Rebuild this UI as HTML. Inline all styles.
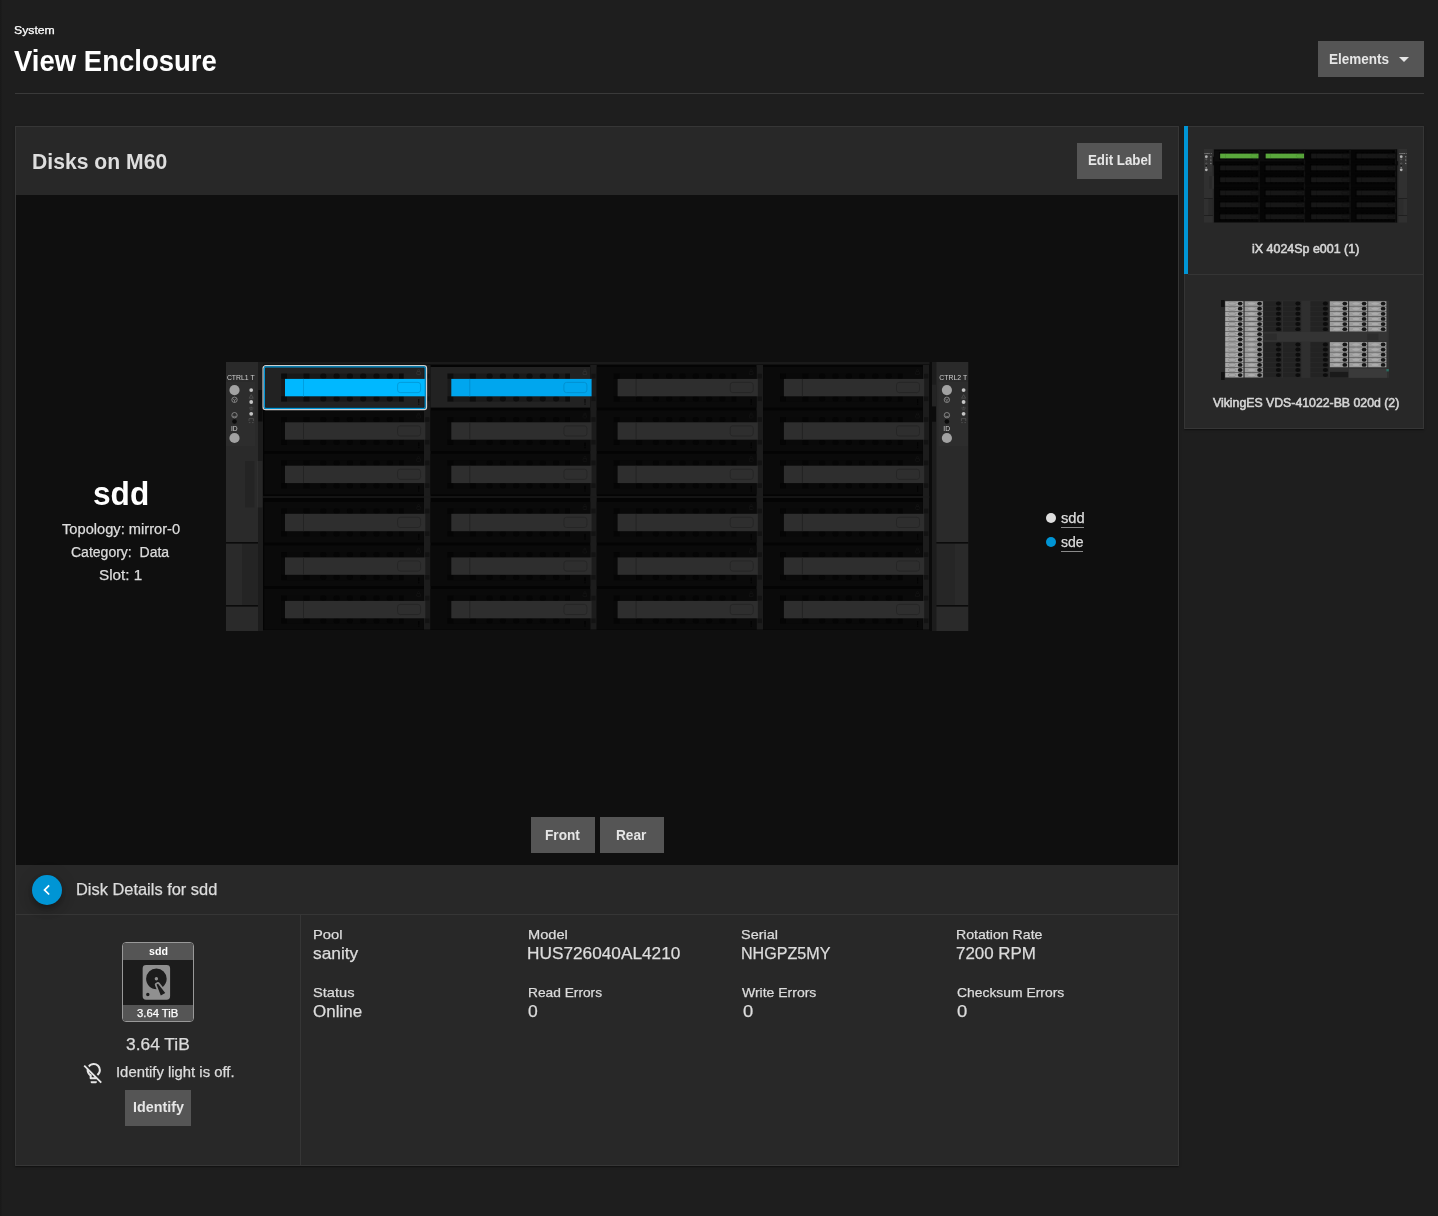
<!DOCTYPE html>
<html lang="en">
<head>
<meta charset="utf-8">
<title>View Enclosure</title>
<style>
html,body{margin:0;padding:0;background:#1e1e1e;}
body{width:1438px;height:1216px;overflow:hidden;font-family:"Liberation Sans",sans-serif;}
#page{will-change:transform;position:relative;width:1438px;height:1216px;background:#1e1e1e;overflow:hidden;}
#page *{box-sizing:border-box;}
.abs{position:absolute;}
.t{position:absolute;white-space:nowrap;line-height:1;transform-origin:0 0;display:inline-block;}
.btn{position:absolute;background:#555555;}
svg{position:absolute;display:block;overflow:visible;}
</style>
</head>
<body>
<div id="page">

<div class="abs" style="left:0;top:0;width:2px;height:1216px;background:linear-gradient(90deg,#191919,#1c1c1c)"></div>
<div class="abs" style="left:15px;top:93px;width:1409px;height:1px;background:#3a3a3a"></div>
<div class="btn" style="left:1318px;top:41px;width:106px;height:36px"></div>
<svg style="left:1399px;top:57px" width="10" height="5" viewBox="0 0 10 5"><path d="M0 0h10l-5 5z" fill="#e6e6e6"/></svg>

<!-- main card -->
<div class="abs" style="left:15px;top:126px;width:1164px;height:1040px;background:#282828;border:1px solid #363636;box-shadow:0 2px 1px -1px rgba(0,0,0,.2),0 1px 1px rgba(0,0,0,.14),0 1px 3px rgba(0,0,0,.12)"></div>
<div class="btn" style="left:1077px;top:143px;width:85px;height:36px"></div>
<div class="abs" style="left:16px;top:195px;width:1162px;height:670px;background:#0f0f0f"></div>
<div class="abs" style="left:226px;top:362px;width:742px;height:269px"><svg class="enc" width="742" height="269" viewBox="0 0 742 269" font-family='"Liberation Sans", sans-serif'><rect x="36" y="0.5" width="670" height="267.5" fill="#040404"/><rect x="36" y="0" width="670" height="2.6" fill="#1a1a1a"/><rect x="198.0" y="3" width="6.5" height="264.6" fill="#1c1c1c"/><rect x="364.2" y="3" width="6.5" height="264.6" fill="#1c1c1c"/><rect x="530.5" y="3" width="6.5" height="264.6" fill="#1c1c1c"/><rect x="696.9" y="3" width="6.5" height="264.6" fill="#1c1c1c"/><rect x="199.2" y="11.8" width="4.2" height="4.6" fill="#131313"/><rect x="199.2" y="34.5" width="4.2" height="4.6" fill="#131313"/><rect x="199.2" y="55.2" width="4.2" height="4.6" fill="#131313"/><rect x="199.2" y="77.9" width="4.2" height="4.6" fill="#131313"/><rect x="199.2" y="98.6" width="4.2" height="4.6" fill="#131313"/><rect x="199.2" y="121.3" width="4.2" height="4.6" fill="#131313"/><rect x="199.2" y="146.7" width="4.2" height="4.6" fill="#131313"/><rect x="199.2" y="169.4" width="4.2" height="4.6" fill="#131313"/><rect x="199.2" y="190.3" width="4.2" height="4.6" fill="#131313"/><rect x="199.2" y="213.0" width="4.2" height="4.6" fill="#131313"/><rect x="199.2" y="233.8" width="4.2" height="4.6" fill="#131313"/><rect x="199.2" y="256.5" width="4.2" height="4.6" fill="#131313"/><rect x="365.4" y="11.8" width="4.2" height="4.6" fill="#131313"/><rect x="365.4" y="34.5" width="4.2" height="4.6" fill="#131313"/><rect x="365.4" y="55.2" width="4.2" height="4.6" fill="#131313"/><rect x="365.4" y="77.9" width="4.2" height="4.6" fill="#131313"/><rect x="365.4" y="98.6" width="4.2" height="4.6" fill="#131313"/><rect x="365.4" y="121.3" width="4.2" height="4.6" fill="#131313"/><rect x="365.4" y="146.7" width="4.2" height="4.6" fill="#131313"/><rect x="365.4" y="169.4" width="4.2" height="4.6" fill="#131313"/><rect x="365.4" y="190.3" width="4.2" height="4.6" fill="#131313"/><rect x="365.4" y="213.0" width="4.2" height="4.6" fill="#131313"/><rect x="365.4" y="233.8" width="4.2" height="4.6" fill="#131313"/><rect x="365.4" y="256.5" width="4.2" height="4.6" fill="#131313"/><rect x="531.7" y="11.8" width="4.2" height="4.6" fill="#131313"/><rect x="531.7" y="34.5" width="4.2" height="4.6" fill="#131313"/><rect x="531.7" y="55.2" width="4.2" height="4.6" fill="#131313"/><rect x="531.7" y="77.9" width="4.2" height="4.6" fill="#131313"/><rect x="531.7" y="98.6" width="4.2" height="4.6" fill="#131313"/><rect x="531.7" y="121.3" width="4.2" height="4.6" fill="#131313"/><rect x="531.7" y="146.7" width="4.2" height="4.6" fill="#131313"/><rect x="531.7" y="169.4" width="4.2" height="4.6" fill="#131313"/><rect x="531.7" y="190.3" width="4.2" height="4.6" fill="#131313"/><rect x="531.7" y="213.0" width="4.2" height="4.6" fill="#131313"/><rect x="531.7" y="233.8" width="4.2" height="4.6" fill="#131313"/><rect x="531.7" y="256.5" width="4.2" height="4.6" fill="#131313"/><rect x="698.1" y="11.8" width="4.2" height="4.6" fill="#131313"/><rect x="698.1" y="34.5" width="4.2" height="4.6" fill="#131313"/><rect x="698.1" y="55.2" width="4.2" height="4.6" fill="#131313"/><rect x="698.1" y="77.9" width="4.2" height="4.6" fill="#131313"/><rect x="698.1" y="98.6" width="4.2" height="4.6" fill="#131313"/><rect x="698.1" y="121.3" width="4.2" height="4.6" fill="#131313"/><rect x="698.1" y="146.7" width="4.2" height="4.6" fill="#131313"/><rect x="698.1" y="169.4" width="4.2" height="4.6" fill="#131313"/><rect x="698.1" y="190.3" width="4.2" height="4.6" fill="#131313"/><rect x="698.1" y="213.0" width="4.2" height="4.6" fill="#131313"/><rect x="698.1" y="233.8" width="4.2" height="4.6" fill="#131313"/><rect x="698.1" y="256.5" width="4.2" height="4.6" fill="#131313"/><rect x="37" y="134.3" width="669" height="1.4" fill="#1c1c1c"/><rect x="38.2" y="5.0" width="159.7" height="40.6" fill="#222222"/><rect x="55.2" y="11.6" width="122.4" height="28" fill="#191919"/><rect x="55.2" y="11.6" width="5.8" height="5.2" fill="#0c0c0c"/><rect x="77.5" y="11.6" width="6" height="5.2" fill="#0c0c0c"/><rect x="94.2" y="11.6" width="6.2" height="5.2" rx="2.4" fill="#0c0c0c"/><rect x="107.5" y="11.6" width="6.2" height="5.2" rx="2.4" fill="#0c0c0c"/><rect x="120.8" y="11.6" width="6.2" height="5.2" rx="2.4" fill="#0c0c0c"/><rect x="134.1" y="11.6" width="6.2" height="5.2" rx="2.4" fill="#0c0c0c"/><rect x="147.4" y="11.6" width="6.2" height="5.2" rx="2.4" fill="#0c0c0c"/><rect x="160.7" y="11.6" width="6.2" height="5.2" rx="2.4" fill="#0c0c0c"/><rect x="173.0" y="11.6" width="4.6" height="5.2" fill="#0c0c0c"/><rect x="55.2" y="34.3" width="5.8" height="5.2" fill="#0c0c0c"/><rect x="77.5" y="34.3" width="6" height="5.2" fill="#0c0c0c"/><rect x="94.2" y="34.3" width="6.2" height="5.2" rx="2.4" fill="#0c0c0c"/><rect x="107.5" y="34.3" width="6.2" height="5.2" rx="2.4" fill="#0c0c0c"/><rect x="120.8" y="34.3" width="6.2" height="5.2" rx="2.4" fill="#0c0c0c"/><rect x="134.1" y="34.3" width="6.2" height="5.2" rx="2.4" fill="#0c0c0c"/><rect x="147.4" y="34.3" width="6.2" height="5.2" rx="2.4" fill="#0c0c0c"/><rect x="160.7" y="34.3" width="6.2" height="5.2" rx="2.4" fill="#0c0c0c"/><rect x="173.0" y="34.3" width="4.6" height="5.2" fill="#0c0c0c"/><rect x="59.0" y="16.9" width="140.3" height="17.4" fill="#00b8ff"/><rect x="77.0" y="16.9" width="1" height="17.4" fill="#009fe0"/><rect x="171.6" y="20.4" width="23" height="10.2" rx="2.6" fill="none" stroke="#0098d8" stroke-width="0.9"/><rect x="190.8" y="9.6" width="3.6" height="3" rx="0.6" fill="none" stroke="#3a3a3a" stroke-width="0.7"/><path d="M191.6 9.6 v-1 a1 1 0 0 1 2 0 v1" fill="none" stroke="#3a3a3a" stroke-width="0.6"/><rect x="192.1" y="37.0" width="1.2" height="3.8" fill="#0c0c0c"/><rect x="192.1" y="41.6" width="1.2" height="1.2" fill="#0c0c0c"/><rect x="38.2" y="48.4" width="159.7" height="40.6" fill="#0a0a0a"/><rect x="55.2" y="55.0" width="122.4" height="28" fill="#090909"/><rect x="55.2" y="55.0" width="5.8" height="5.2" fill="#050505"/><rect x="77.5" y="55.0" width="6" height="5.2" fill="#050505"/><rect x="94.2" y="55.0" width="6.2" height="5.2" rx="2.4" fill="#050505"/><rect x="107.5" y="55.0" width="6.2" height="5.2" rx="2.4" fill="#050505"/><rect x="120.8" y="55.0" width="6.2" height="5.2" rx="2.4" fill="#050505"/><rect x="134.1" y="55.0" width="6.2" height="5.2" rx="2.4" fill="#050505"/><rect x="147.4" y="55.0" width="6.2" height="5.2" rx="2.4" fill="#050505"/><rect x="160.7" y="55.0" width="6.2" height="5.2" rx="2.4" fill="#050505"/><rect x="173.0" y="55.0" width="4.6" height="5.2" fill="#050505"/><rect x="55.2" y="77.7" width="5.8" height="5.2" fill="#050505"/><rect x="77.5" y="77.7" width="6" height="5.2" fill="#050505"/><rect x="94.2" y="77.7" width="6.2" height="5.2" rx="2.4" fill="#050505"/><rect x="107.5" y="77.7" width="6.2" height="5.2" rx="2.4" fill="#050505"/><rect x="120.8" y="77.7" width="6.2" height="5.2" rx="2.4" fill="#050505"/><rect x="134.1" y="77.7" width="6.2" height="5.2" rx="2.4" fill="#050505"/><rect x="147.4" y="77.7" width="6.2" height="5.2" rx="2.4" fill="#050505"/><rect x="160.7" y="77.7" width="6.2" height="5.2" rx="2.4" fill="#050505"/><rect x="173.0" y="77.7" width="4.6" height="5.2" fill="#050505"/><rect x="59.0" y="60.3" width="140.3" height="17.4" fill="#2e2e2e"/><rect x="77.0" y="60.3" width="1" height="17.4" fill="#232323"/><rect x="171.6" y="63.8" width="23" height="10.2" rx="2.6" fill="none" stroke="#252525" stroke-width="0.9"/><rect x="190.8" y="53.0" width="3.6" height="3" rx="0.6" fill="none" stroke="#161616" stroke-width="0.7"/><path d="M191.6 53.0 v-1 a1 1 0 0 1 2 0 v1" fill="none" stroke="#161616" stroke-width="0.6"/><rect x="192.1" y="80.4" width="1.2" height="3.8" fill="#030303"/><rect x="192.1" y="85.0" width="1.2" height="1.2" fill="#030303"/><rect x="38.2" y="91.8" width="159.7" height="40.6" fill="#0a0a0a"/><rect x="55.2" y="98.4" width="122.4" height="28" fill="#090909"/><rect x="55.2" y="98.4" width="5.8" height="5.2" fill="#050505"/><rect x="77.5" y="98.4" width="6" height="5.2" fill="#050505"/><rect x="94.2" y="98.4" width="6.2" height="5.2" rx="2.4" fill="#050505"/><rect x="107.5" y="98.4" width="6.2" height="5.2" rx="2.4" fill="#050505"/><rect x="120.8" y="98.4" width="6.2" height="5.2" rx="2.4" fill="#050505"/><rect x="134.1" y="98.4" width="6.2" height="5.2" rx="2.4" fill="#050505"/><rect x="147.4" y="98.4" width="6.2" height="5.2" rx="2.4" fill="#050505"/><rect x="160.7" y="98.4" width="6.2" height="5.2" rx="2.4" fill="#050505"/><rect x="173.0" y="98.4" width="4.6" height="5.2" fill="#050505"/><rect x="55.2" y="121.1" width="5.8" height="5.2" fill="#050505"/><rect x="77.5" y="121.1" width="6" height="5.2" fill="#050505"/><rect x="94.2" y="121.1" width="6.2" height="5.2" rx="2.4" fill="#050505"/><rect x="107.5" y="121.1" width="6.2" height="5.2" rx="2.4" fill="#050505"/><rect x="120.8" y="121.1" width="6.2" height="5.2" rx="2.4" fill="#050505"/><rect x="134.1" y="121.1" width="6.2" height="5.2" rx="2.4" fill="#050505"/><rect x="147.4" y="121.1" width="6.2" height="5.2" rx="2.4" fill="#050505"/><rect x="160.7" y="121.1" width="6.2" height="5.2" rx="2.4" fill="#050505"/><rect x="173.0" y="121.1" width="4.6" height="5.2" fill="#050505"/><rect x="59.0" y="103.7" width="140.3" height="17.4" fill="#2e2e2e"/><rect x="77.0" y="103.7" width="1" height="17.4" fill="#232323"/><rect x="171.6" y="107.2" width="23" height="10.2" rx="2.6" fill="none" stroke="#252525" stroke-width="0.9"/><rect x="190.8" y="96.4" width="3.6" height="3" rx="0.6" fill="none" stroke="#161616" stroke-width="0.7"/><path d="M191.6 96.4 v-1 a1 1 0 0 1 2 0 v1" fill="none" stroke="#161616" stroke-width="0.6"/><rect x="192.1" y="123.8" width="1.2" height="3.8" fill="#030303"/><rect x="192.1" y="128.4" width="1.2" height="1.2" fill="#030303"/><rect x="38.2" y="139.9" width="159.7" height="40.6" fill="#0a0a0a"/><rect x="55.2" y="146.5" width="122.4" height="28" fill="#090909"/><rect x="55.2" y="146.5" width="5.8" height="5.2" fill="#050505"/><rect x="77.5" y="146.5" width="6" height="5.2" fill="#050505"/><rect x="94.2" y="146.5" width="6.2" height="5.2" rx="2.4" fill="#050505"/><rect x="107.5" y="146.5" width="6.2" height="5.2" rx="2.4" fill="#050505"/><rect x="120.8" y="146.5" width="6.2" height="5.2" rx="2.4" fill="#050505"/><rect x="134.1" y="146.5" width="6.2" height="5.2" rx="2.4" fill="#050505"/><rect x="147.4" y="146.5" width="6.2" height="5.2" rx="2.4" fill="#050505"/><rect x="160.7" y="146.5" width="6.2" height="5.2" rx="2.4" fill="#050505"/><rect x="173.0" y="146.5" width="4.6" height="5.2" fill="#050505"/><rect x="55.2" y="169.2" width="5.8" height="5.2" fill="#050505"/><rect x="77.5" y="169.2" width="6" height="5.2" fill="#050505"/><rect x="94.2" y="169.2" width="6.2" height="5.2" rx="2.4" fill="#050505"/><rect x="107.5" y="169.2" width="6.2" height="5.2" rx="2.4" fill="#050505"/><rect x="120.8" y="169.2" width="6.2" height="5.2" rx="2.4" fill="#050505"/><rect x="134.1" y="169.2" width="6.2" height="5.2" rx="2.4" fill="#050505"/><rect x="147.4" y="169.2" width="6.2" height="5.2" rx="2.4" fill="#050505"/><rect x="160.7" y="169.2" width="6.2" height="5.2" rx="2.4" fill="#050505"/><rect x="173.0" y="169.2" width="4.6" height="5.2" fill="#050505"/><rect x="59.0" y="151.8" width="140.3" height="17.4" fill="#2e2e2e"/><rect x="77.0" y="151.8" width="1" height="17.4" fill="#232323"/><rect x="171.6" y="155.3" width="23" height="10.2" rx="2.6" fill="none" stroke="#252525" stroke-width="0.9"/><rect x="190.8" y="144.5" width="3.6" height="3" rx="0.6" fill="none" stroke="#161616" stroke-width="0.7"/><path d="M191.6 144.5 v-1 a1 1 0 0 1 2 0 v1" fill="none" stroke="#161616" stroke-width="0.6"/><rect x="192.1" y="171.9" width="1.2" height="3.8" fill="#030303"/><rect x="192.1" y="176.5" width="1.2" height="1.2" fill="#030303"/><rect x="38.2" y="183.5" width="159.7" height="40.6" fill="#0a0a0a"/><rect x="55.2" y="190.1" width="122.4" height="28" fill="#090909"/><rect x="55.2" y="190.1" width="5.8" height="5.2" fill="#050505"/><rect x="77.5" y="190.1" width="6" height="5.2" fill="#050505"/><rect x="94.2" y="190.1" width="6.2" height="5.2" rx="2.4" fill="#050505"/><rect x="107.5" y="190.1" width="6.2" height="5.2" rx="2.4" fill="#050505"/><rect x="120.8" y="190.1" width="6.2" height="5.2" rx="2.4" fill="#050505"/><rect x="134.1" y="190.1" width="6.2" height="5.2" rx="2.4" fill="#050505"/><rect x="147.4" y="190.1" width="6.2" height="5.2" rx="2.4" fill="#050505"/><rect x="160.7" y="190.1" width="6.2" height="5.2" rx="2.4" fill="#050505"/><rect x="173.0" y="190.1" width="4.6" height="5.2" fill="#050505"/><rect x="55.2" y="212.8" width="5.8" height="5.2" fill="#050505"/><rect x="77.5" y="212.8" width="6" height="5.2" fill="#050505"/><rect x="94.2" y="212.8" width="6.2" height="5.2" rx="2.4" fill="#050505"/><rect x="107.5" y="212.8" width="6.2" height="5.2" rx="2.4" fill="#050505"/><rect x="120.8" y="212.8" width="6.2" height="5.2" rx="2.4" fill="#050505"/><rect x="134.1" y="212.8" width="6.2" height="5.2" rx="2.4" fill="#050505"/><rect x="147.4" y="212.8" width="6.2" height="5.2" rx="2.4" fill="#050505"/><rect x="160.7" y="212.8" width="6.2" height="5.2" rx="2.4" fill="#050505"/><rect x="173.0" y="212.8" width="4.6" height="5.2" fill="#050505"/><rect x="59.0" y="195.4" width="140.3" height="17.4" fill="#2e2e2e"/><rect x="77.0" y="195.4" width="1" height="17.4" fill="#232323"/><rect x="171.6" y="198.9" width="23" height="10.2" rx="2.6" fill="none" stroke="#252525" stroke-width="0.9"/><rect x="190.8" y="188.1" width="3.6" height="3" rx="0.6" fill="none" stroke="#161616" stroke-width="0.7"/><path d="M191.6 188.1 v-1 a1 1 0 0 1 2 0 v1" fill="none" stroke="#161616" stroke-width="0.6"/><rect x="192.1" y="215.5" width="1.2" height="3.8" fill="#030303"/><rect x="192.1" y="220.1" width="1.2" height="1.2" fill="#030303"/><rect x="38.2" y="227.0" width="159.7" height="40.6" fill="#0a0a0a"/><rect x="55.2" y="233.6" width="122.4" height="28" fill="#090909"/><rect x="55.2" y="233.6" width="5.8" height="5.2" fill="#050505"/><rect x="77.5" y="233.6" width="6" height="5.2" fill="#050505"/><rect x="94.2" y="233.6" width="6.2" height="5.2" rx="2.4" fill="#050505"/><rect x="107.5" y="233.6" width="6.2" height="5.2" rx="2.4" fill="#050505"/><rect x="120.8" y="233.6" width="6.2" height="5.2" rx="2.4" fill="#050505"/><rect x="134.1" y="233.6" width="6.2" height="5.2" rx="2.4" fill="#050505"/><rect x="147.4" y="233.6" width="6.2" height="5.2" rx="2.4" fill="#050505"/><rect x="160.7" y="233.6" width="6.2" height="5.2" rx="2.4" fill="#050505"/><rect x="173.0" y="233.6" width="4.6" height="5.2" fill="#050505"/><rect x="55.2" y="256.3" width="5.8" height="5.2" fill="#050505"/><rect x="77.5" y="256.3" width="6" height="5.2" fill="#050505"/><rect x="94.2" y="256.3" width="6.2" height="5.2" rx="2.4" fill="#050505"/><rect x="107.5" y="256.3" width="6.2" height="5.2" rx="2.4" fill="#050505"/><rect x="120.8" y="256.3" width="6.2" height="5.2" rx="2.4" fill="#050505"/><rect x="134.1" y="256.3" width="6.2" height="5.2" rx="2.4" fill="#050505"/><rect x="147.4" y="256.3" width="6.2" height="5.2" rx="2.4" fill="#050505"/><rect x="160.7" y="256.3" width="6.2" height="5.2" rx="2.4" fill="#050505"/><rect x="173.0" y="256.3" width="4.6" height="5.2" fill="#050505"/><rect x="59.0" y="238.9" width="140.3" height="17.4" fill="#2e2e2e"/><rect x="77.0" y="238.9" width="1" height="17.4" fill="#232323"/><rect x="171.6" y="242.4" width="23" height="10.2" rx="2.6" fill="none" stroke="#252525" stroke-width="0.9"/><rect x="190.8" y="231.6" width="3.6" height="3" rx="0.6" fill="none" stroke="#161616" stroke-width="0.7"/><path d="M191.6 231.6 v-1 a1 1 0 0 1 2 0 v1" fill="none" stroke="#161616" stroke-width="0.6"/><rect x="192.1" y="259.0" width="1.2" height="3.8" fill="#030303"/><rect x="192.1" y="263.6" width="1.2" height="1.2" fill="#030303"/><rect x="204.5" y="5.0" width="159.7" height="40.6" fill="#222222"/><rect x="221.5" y="11.6" width="122.4" height="28" fill="#1a1a1a"/><rect x="221.5" y="11.6" width="5.8" height="5.2" fill="#0d0d0d"/><rect x="243.8" y="11.6" width="6" height="5.2" fill="#0d0d0d"/><rect x="260.5" y="11.6" width="6.2" height="5.2" rx="2.4" fill="#0d0d0d"/><rect x="273.8" y="11.6" width="6.2" height="5.2" rx="2.4" fill="#0d0d0d"/><rect x="287.1" y="11.6" width="6.2" height="5.2" rx="2.4" fill="#0d0d0d"/><rect x="300.4" y="11.6" width="6.2" height="5.2" rx="2.4" fill="#0d0d0d"/><rect x="313.7" y="11.6" width="6.2" height="5.2" rx="2.4" fill="#0d0d0d"/><rect x="327.0" y="11.6" width="6.2" height="5.2" rx="2.4" fill="#0d0d0d"/><rect x="339.3" y="11.6" width="4.6" height="5.2" fill="#0d0d0d"/><rect x="221.5" y="34.3" width="5.8" height="5.2" fill="#0d0d0d"/><rect x="243.8" y="34.3" width="6" height="5.2" fill="#0d0d0d"/><rect x="260.5" y="34.3" width="6.2" height="5.2" rx="2.4" fill="#0d0d0d"/><rect x="273.8" y="34.3" width="6.2" height="5.2" rx="2.4" fill="#0d0d0d"/><rect x="287.1" y="34.3" width="6.2" height="5.2" rx="2.4" fill="#0d0d0d"/><rect x="300.4" y="34.3" width="6.2" height="5.2" rx="2.4" fill="#0d0d0d"/><rect x="313.7" y="34.3" width="6.2" height="5.2" rx="2.4" fill="#0d0d0d"/><rect x="327.0" y="34.3" width="6.2" height="5.2" rx="2.4" fill="#0d0d0d"/><rect x="339.3" y="34.3" width="4.6" height="5.2" fill="#0d0d0d"/><rect x="225.3" y="16.9" width="140.3" height="17.4" fill="#00a6ee"/><rect x="243.3" y="16.9" width="1" height="17.4" fill="#0090d2"/><rect x="337.9" y="20.4" width="23" height="10.2" rx="2.6" fill="none" stroke="#008fce" stroke-width="0.9"/><rect x="357.1" y="9.6" width="3.6" height="3" rx="0.6" fill="none" stroke="#363636" stroke-width="0.7"/><path d="M357.9 9.6 v-1 a1 1 0 0 1 2 0 v1" fill="none" stroke="#363636" stroke-width="0.6"/><rect x="358.4" y="37.0" width="1.2" height="3.8" fill="#0c0c0c"/><rect x="358.4" y="41.6" width="1.2" height="1.2" fill="#0c0c0c"/><rect x="204.5" y="48.4" width="159.7" height="40.6" fill="#0a0a0a"/><rect x="221.5" y="55.0" width="122.4" height="28" fill="#090909"/><rect x="221.5" y="55.0" width="5.8" height="5.2" fill="#050505"/><rect x="243.8" y="55.0" width="6" height="5.2" fill="#050505"/><rect x="260.5" y="55.0" width="6.2" height="5.2" rx="2.4" fill="#050505"/><rect x="273.8" y="55.0" width="6.2" height="5.2" rx="2.4" fill="#050505"/><rect x="287.1" y="55.0" width="6.2" height="5.2" rx="2.4" fill="#050505"/><rect x="300.4" y="55.0" width="6.2" height="5.2" rx="2.4" fill="#050505"/><rect x="313.7" y="55.0" width="6.2" height="5.2" rx="2.4" fill="#050505"/><rect x="327.0" y="55.0" width="6.2" height="5.2" rx="2.4" fill="#050505"/><rect x="339.3" y="55.0" width="4.6" height="5.2" fill="#050505"/><rect x="221.5" y="77.7" width="5.8" height="5.2" fill="#050505"/><rect x="243.8" y="77.7" width="6" height="5.2" fill="#050505"/><rect x="260.5" y="77.7" width="6.2" height="5.2" rx="2.4" fill="#050505"/><rect x="273.8" y="77.7" width="6.2" height="5.2" rx="2.4" fill="#050505"/><rect x="287.1" y="77.7" width="6.2" height="5.2" rx="2.4" fill="#050505"/><rect x="300.4" y="77.7" width="6.2" height="5.2" rx="2.4" fill="#050505"/><rect x="313.7" y="77.7" width="6.2" height="5.2" rx="2.4" fill="#050505"/><rect x="327.0" y="77.7" width="6.2" height="5.2" rx="2.4" fill="#050505"/><rect x="339.3" y="77.7" width="4.6" height="5.2" fill="#050505"/><rect x="225.3" y="60.3" width="140.3" height="17.4" fill="#2e2e2e"/><rect x="243.3" y="60.3" width="1" height="17.4" fill="#232323"/><rect x="337.9" y="63.8" width="23" height="10.2" rx="2.6" fill="none" stroke="#252525" stroke-width="0.9"/><rect x="357.1" y="53.0" width="3.6" height="3" rx="0.6" fill="none" stroke="#161616" stroke-width="0.7"/><path d="M357.9 53.0 v-1 a1 1 0 0 1 2 0 v1" fill="none" stroke="#161616" stroke-width="0.6"/><rect x="358.4" y="80.4" width="1.2" height="3.8" fill="#030303"/><rect x="358.4" y="85.0" width="1.2" height="1.2" fill="#030303"/><rect x="204.5" y="91.8" width="159.7" height="40.6" fill="#0a0a0a"/><rect x="221.5" y="98.4" width="122.4" height="28" fill="#090909"/><rect x="221.5" y="98.4" width="5.8" height="5.2" fill="#050505"/><rect x="243.8" y="98.4" width="6" height="5.2" fill="#050505"/><rect x="260.5" y="98.4" width="6.2" height="5.2" rx="2.4" fill="#050505"/><rect x="273.8" y="98.4" width="6.2" height="5.2" rx="2.4" fill="#050505"/><rect x="287.1" y="98.4" width="6.2" height="5.2" rx="2.4" fill="#050505"/><rect x="300.4" y="98.4" width="6.2" height="5.2" rx="2.4" fill="#050505"/><rect x="313.7" y="98.4" width="6.2" height="5.2" rx="2.4" fill="#050505"/><rect x="327.0" y="98.4" width="6.2" height="5.2" rx="2.4" fill="#050505"/><rect x="339.3" y="98.4" width="4.6" height="5.2" fill="#050505"/><rect x="221.5" y="121.1" width="5.8" height="5.2" fill="#050505"/><rect x="243.8" y="121.1" width="6" height="5.2" fill="#050505"/><rect x="260.5" y="121.1" width="6.2" height="5.2" rx="2.4" fill="#050505"/><rect x="273.8" y="121.1" width="6.2" height="5.2" rx="2.4" fill="#050505"/><rect x="287.1" y="121.1" width="6.2" height="5.2" rx="2.4" fill="#050505"/><rect x="300.4" y="121.1" width="6.2" height="5.2" rx="2.4" fill="#050505"/><rect x="313.7" y="121.1" width="6.2" height="5.2" rx="2.4" fill="#050505"/><rect x="327.0" y="121.1" width="6.2" height="5.2" rx="2.4" fill="#050505"/><rect x="339.3" y="121.1" width="4.6" height="5.2" fill="#050505"/><rect x="225.3" y="103.7" width="140.3" height="17.4" fill="#2e2e2e"/><rect x="243.3" y="103.7" width="1" height="17.4" fill="#232323"/><rect x="337.9" y="107.2" width="23" height="10.2" rx="2.6" fill="none" stroke="#252525" stroke-width="0.9"/><rect x="357.1" y="96.4" width="3.6" height="3" rx="0.6" fill="none" stroke="#161616" stroke-width="0.7"/><path d="M357.9 96.4 v-1 a1 1 0 0 1 2 0 v1" fill="none" stroke="#161616" stroke-width="0.6"/><rect x="358.4" y="123.8" width="1.2" height="3.8" fill="#030303"/><rect x="358.4" y="128.4" width="1.2" height="1.2" fill="#030303"/><rect x="204.5" y="139.9" width="159.7" height="40.6" fill="#0a0a0a"/><rect x="221.5" y="146.5" width="122.4" height="28" fill="#090909"/><rect x="221.5" y="146.5" width="5.8" height="5.2" fill="#050505"/><rect x="243.8" y="146.5" width="6" height="5.2" fill="#050505"/><rect x="260.5" y="146.5" width="6.2" height="5.2" rx="2.4" fill="#050505"/><rect x="273.8" y="146.5" width="6.2" height="5.2" rx="2.4" fill="#050505"/><rect x="287.1" y="146.5" width="6.2" height="5.2" rx="2.4" fill="#050505"/><rect x="300.4" y="146.5" width="6.2" height="5.2" rx="2.4" fill="#050505"/><rect x="313.7" y="146.5" width="6.2" height="5.2" rx="2.4" fill="#050505"/><rect x="327.0" y="146.5" width="6.2" height="5.2" rx="2.4" fill="#050505"/><rect x="339.3" y="146.5" width="4.6" height="5.2" fill="#050505"/><rect x="221.5" y="169.2" width="5.8" height="5.2" fill="#050505"/><rect x="243.8" y="169.2" width="6" height="5.2" fill="#050505"/><rect x="260.5" y="169.2" width="6.2" height="5.2" rx="2.4" fill="#050505"/><rect x="273.8" y="169.2" width="6.2" height="5.2" rx="2.4" fill="#050505"/><rect x="287.1" y="169.2" width="6.2" height="5.2" rx="2.4" fill="#050505"/><rect x="300.4" y="169.2" width="6.2" height="5.2" rx="2.4" fill="#050505"/><rect x="313.7" y="169.2" width="6.2" height="5.2" rx="2.4" fill="#050505"/><rect x="327.0" y="169.2" width="6.2" height="5.2" rx="2.4" fill="#050505"/><rect x="339.3" y="169.2" width="4.6" height="5.2" fill="#050505"/><rect x="225.3" y="151.8" width="140.3" height="17.4" fill="#2e2e2e"/><rect x="243.3" y="151.8" width="1" height="17.4" fill="#232323"/><rect x="337.9" y="155.3" width="23" height="10.2" rx="2.6" fill="none" stroke="#252525" stroke-width="0.9"/><rect x="357.1" y="144.5" width="3.6" height="3" rx="0.6" fill="none" stroke="#161616" stroke-width="0.7"/><path d="M357.9 144.5 v-1 a1 1 0 0 1 2 0 v1" fill="none" stroke="#161616" stroke-width="0.6"/><rect x="358.4" y="171.9" width="1.2" height="3.8" fill="#030303"/><rect x="358.4" y="176.5" width="1.2" height="1.2" fill="#030303"/><rect x="204.5" y="183.5" width="159.7" height="40.6" fill="#0a0a0a"/><rect x="221.5" y="190.1" width="122.4" height="28" fill="#090909"/><rect x="221.5" y="190.1" width="5.8" height="5.2" fill="#050505"/><rect x="243.8" y="190.1" width="6" height="5.2" fill="#050505"/><rect x="260.5" y="190.1" width="6.2" height="5.2" rx="2.4" fill="#050505"/><rect x="273.8" y="190.1" width="6.2" height="5.2" rx="2.4" fill="#050505"/><rect x="287.1" y="190.1" width="6.2" height="5.2" rx="2.4" fill="#050505"/><rect x="300.4" y="190.1" width="6.2" height="5.2" rx="2.4" fill="#050505"/><rect x="313.7" y="190.1" width="6.2" height="5.2" rx="2.4" fill="#050505"/><rect x="327.0" y="190.1" width="6.2" height="5.2" rx="2.4" fill="#050505"/><rect x="339.3" y="190.1" width="4.6" height="5.2" fill="#050505"/><rect x="221.5" y="212.8" width="5.8" height="5.2" fill="#050505"/><rect x="243.8" y="212.8" width="6" height="5.2" fill="#050505"/><rect x="260.5" y="212.8" width="6.2" height="5.2" rx="2.4" fill="#050505"/><rect x="273.8" y="212.8" width="6.2" height="5.2" rx="2.4" fill="#050505"/><rect x="287.1" y="212.8" width="6.2" height="5.2" rx="2.4" fill="#050505"/><rect x="300.4" y="212.8" width="6.2" height="5.2" rx="2.4" fill="#050505"/><rect x="313.7" y="212.8" width="6.2" height="5.2" rx="2.4" fill="#050505"/><rect x="327.0" y="212.8" width="6.2" height="5.2" rx="2.4" fill="#050505"/><rect x="339.3" y="212.8" width="4.6" height="5.2" fill="#050505"/><rect x="225.3" y="195.4" width="140.3" height="17.4" fill="#2e2e2e"/><rect x="243.3" y="195.4" width="1" height="17.4" fill="#232323"/><rect x="337.9" y="198.9" width="23" height="10.2" rx="2.6" fill="none" stroke="#252525" stroke-width="0.9"/><rect x="357.1" y="188.1" width="3.6" height="3" rx="0.6" fill="none" stroke="#161616" stroke-width="0.7"/><path d="M357.9 188.1 v-1 a1 1 0 0 1 2 0 v1" fill="none" stroke="#161616" stroke-width="0.6"/><rect x="358.4" y="215.5" width="1.2" height="3.8" fill="#030303"/><rect x="358.4" y="220.1" width="1.2" height="1.2" fill="#030303"/><rect x="204.5" y="227.0" width="159.7" height="40.6" fill="#0a0a0a"/><rect x="221.5" y="233.6" width="122.4" height="28" fill="#090909"/><rect x="221.5" y="233.6" width="5.8" height="5.2" fill="#050505"/><rect x="243.8" y="233.6" width="6" height="5.2" fill="#050505"/><rect x="260.5" y="233.6" width="6.2" height="5.2" rx="2.4" fill="#050505"/><rect x="273.8" y="233.6" width="6.2" height="5.2" rx="2.4" fill="#050505"/><rect x="287.1" y="233.6" width="6.2" height="5.2" rx="2.4" fill="#050505"/><rect x="300.4" y="233.6" width="6.2" height="5.2" rx="2.4" fill="#050505"/><rect x="313.7" y="233.6" width="6.2" height="5.2" rx="2.4" fill="#050505"/><rect x="327.0" y="233.6" width="6.2" height="5.2" rx="2.4" fill="#050505"/><rect x="339.3" y="233.6" width="4.6" height="5.2" fill="#050505"/><rect x="221.5" y="256.3" width="5.8" height="5.2" fill="#050505"/><rect x="243.8" y="256.3" width="6" height="5.2" fill="#050505"/><rect x="260.5" y="256.3" width="6.2" height="5.2" rx="2.4" fill="#050505"/><rect x="273.8" y="256.3" width="6.2" height="5.2" rx="2.4" fill="#050505"/><rect x="287.1" y="256.3" width="6.2" height="5.2" rx="2.4" fill="#050505"/><rect x="300.4" y="256.3" width="6.2" height="5.2" rx="2.4" fill="#050505"/><rect x="313.7" y="256.3" width="6.2" height="5.2" rx="2.4" fill="#050505"/><rect x="327.0" y="256.3" width="6.2" height="5.2" rx="2.4" fill="#050505"/><rect x="339.3" y="256.3" width="4.6" height="5.2" fill="#050505"/><rect x="225.3" y="238.9" width="140.3" height="17.4" fill="#2e2e2e"/><rect x="243.3" y="238.9" width="1" height="17.4" fill="#232323"/><rect x="337.9" y="242.4" width="23" height="10.2" rx="2.6" fill="none" stroke="#252525" stroke-width="0.9"/><rect x="357.1" y="231.6" width="3.6" height="3" rx="0.6" fill="none" stroke="#161616" stroke-width="0.7"/><path d="M357.9 231.6 v-1 a1 1 0 0 1 2 0 v1" fill="none" stroke="#161616" stroke-width="0.6"/><rect x="358.4" y="259.0" width="1.2" height="3.8" fill="#030303"/><rect x="358.4" y="263.6" width="1.2" height="1.2" fill="#030303"/><rect x="370.8" y="5.0" width="159.7" height="40.6" fill="#0a0a0a"/><rect x="387.8" y="11.6" width="122.4" height="28" fill="#090909"/><rect x="387.8" y="11.6" width="5.8" height="5.2" fill="#050505"/><rect x="410.1" y="11.6" width="6" height="5.2" fill="#050505"/><rect x="426.8" y="11.6" width="6.2" height="5.2" rx="2.4" fill="#050505"/><rect x="440.1" y="11.6" width="6.2" height="5.2" rx="2.4" fill="#050505"/><rect x="453.4" y="11.6" width="6.2" height="5.2" rx="2.4" fill="#050505"/><rect x="466.7" y="11.6" width="6.2" height="5.2" rx="2.4" fill="#050505"/><rect x="480.0" y="11.6" width="6.2" height="5.2" rx="2.4" fill="#050505"/><rect x="493.3" y="11.6" width="6.2" height="5.2" rx="2.4" fill="#050505"/><rect x="505.6" y="11.6" width="4.6" height="5.2" fill="#050505"/><rect x="387.8" y="34.3" width="5.8" height="5.2" fill="#050505"/><rect x="410.1" y="34.3" width="6" height="5.2" fill="#050505"/><rect x="426.8" y="34.3" width="6.2" height="5.2" rx="2.4" fill="#050505"/><rect x="440.1" y="34.3" width="6.2" height="5.2" rx="2.4" fill="#050505"/><rect x="453.4" y="34.3" width="6.2" height="5.2" rx="2.4" fill="#050505"/><rect x="466.7" y="34.3" width="6.2" height="5.2" rx="2.4" fill="#050505"/><rect x="480.0" y="34.3" width="6.2" height="5.2" rx="2.4" fill="#050505"/><rect x="493.3" y="34.3" width="6.2" height="5.2" rx="2.4" fill="#050505"/><rect x="505.6" y="34.3" width="4.6" height="5.2" fill="#050505"/><rect x="391.6" y="16.9" width="140.3" height="17.4" fill="#2e2e2e"/><rect x="409.6" y="16.9" width="1" height="17.4" fill="#232323"/><rect x="504.2" y="20.4" width="23" height="10.2" rx="2.6" fill="none" stroke="#252525" stroke-width="0.9"/><rect x="523.4" y="9.6" width="3.6" height="3" rx="0.6" fill="none" stroke="#161616" stroke-width="0.7"/><path d="M524.2 9.6 v-1 a1 1 0 0 1 2 0 v1" fill="none" stroke="#161616" stroke-width="0.6"/><rect x="524.7" y="37.0" width="1.2" height="3.8" fill="#030303"/><rect x="524.7" y="41.6" width="1.2" height="1.2" fill="#030303"/><rect x="370.8" y="48.4" width="159.7" height="40.6" fill="#0a0a0a"/><rect x="387.8" y="55.0" width="122.4" height="28" fill="#090909"/><rect x="387.8" y="55.0" width="5.8" height="5.2" fill="#050505"/><rect x="410.1" y="55.0" width="6" height="5.2" fill="#050505"/><rect x="426.8" y="55.0" width="6.2" height="5.2" rx="2.4" fill="#050505"/><rect x="440.1" y="55.0" width="6.2" height="5.2" rx="2.4" fill="#050505"/><rect x="453.4" y="55.0" width="6.2" height="5.2" rx="2.4" fill="#050505"/><rect x="466.7" y="55.0" width="6.2" height="5.2" rx="2.4" fill="#050505"/><rect x="480.0" y="55.0" width="6.2" height="5.2" rx="2.4" fill="#050505"/><rect x="493.3" y="55.0" width="6.2" height="5.2" rx="2.4" fill="#050505"/><rect x="505.6" y="55.0" width="4.6" height="5.2" fill="#050505"/><rect x="387.8" y="77.7" width="5.8" height="5.2" fill="#050505"/><rect x="410.1" y="77.7" width="6" height="5.2" fill="#050505"/><rect x="426.8" y="77.7" width="6.2" height="5.2" rx="2.4" fill="#050505"/><rect x="440.1" y="77.7" width="6.2" height="5.2" rx="2.4" fill="#050505"/><rect x="453.4" y="77.7" width="6.2" height="5.2" rx="2.4" fill="#050505"/><rect x="466.7" y="77.7" width="6.2" height="5.2" rx="2.4" fill="#050505"/><rect x="480.0" y="77.7" width="6.2" height="5.2" rx="2.4" fill="#050505"/><rect x="493.3" y="77.7" width="6.2" height="5.2" rx="2.4" fill="#050505"/><rect x="505.6" y="77.7" width="4.6" height="5.2" fill="#050505"/><rect x="391.6" y="60.3" width="140.3" height="17.4" fill="#2e2e2e"/><rect x="409.6" y="60.3" width="1" height="17.4" fill="#232323"/><rect x="504.2" y="63.8" width="23" height="10.2" rx="2.6" fill="none" stroke="#252525" stroke-width="0.9"/><rect x="523.4" y="53.0" width="3.6" height="3" rx="0.6" fill="none" stroke="#161616" stroke-width="0.7"/><path d="M524.2 53.0 v-1 a1 1 0 0 1 2 0 v1" fill="none" stroke="#161616" stroke-width="0.6"/><rect x="524.7" y="80.4" width="1.2" height="3.8" fill="#030303"/><rect x="524.7" y="85.0" width="1.2" height="1.2" fill="#030303"/><rect x="370.8" y="91.8" width="159.7" height="40.6" fill="#0a0a0a"/><rect x="387.8" y="98.4" width="122.4" height="28" fill="#090909"/><rect x="387.8" y="98.4" width="5.8" height="5.2" fill="#050505"/><rect x="410.1" y="98.4" width="6" height="5.2" fill="#050505"/><rect x="426.8" y="98.4" width="6.2" height="5.2" rx="2.4" fill="#050505"/><rect x="440.1" y="98.4" width="6.2" height="5.2" rx="2.4" fill="#050505"/><rect x="453.4" y="98.4" width="6.2" height="5.2" rx="2.4" fill="#050505"/><rect x="466.7" y="98.4" width="6.2" height="5.2" rx="2.4" fill="#050505"/><rect x="480.0" y="98.4" width="6.2" height="5.2" rx="2.4" fill="#050505"/><rect x="493.3" y="98.4" width="6.2" height="5.2" rx="2.4" fill="#050505"/><rect x="505.6" y="98.4" width="4.6" height="5.2" fill="#050505"/><rect x="387.8" y="121.1" width="5.8" height="5.2" fill="#050505"/><rect x="410.1" y="121.1" width="6" height="5.2" fill="#050505"/><rect x="426.8" y="121.1" width="6.2" height="5.2" rx="2.4" fill="#050505"/><rect x="440.1" y="121.1" width="6.2" height="5.2" rx="2.4" fill="#050505"/><rect x="453.4" y="121.1" width="6.2" height="5.2" rx="2.4" fill="#050505"/><rect x="466.7" y="121.1" width="6.2" height="5.2" rx="2.4" fill="#050505"/><rect x="480.0" y="121.1" width="6.2" height="5.2" rx="2.4" fill="#050505"/><rect x="493.3" y="121.1" width="6.2" height="5.2" rx="2.4" fill="#050505"/><rect x="505.6" y="121.1" width="4.6" height="5.2" fill="#050505"/><rect x="391.6" y="103.7" width="140.3" height="17.4" fill="#2e2e2e"/><rect x="409.6" y="103.7" width="1" height="17.4" fill="#232323"/><rect x="504.2" y="107.2" width="23" height="10.2" rx="2.6" fill="none" stroke="#252525" stroke-width="0.9"/><rect x="523.4" y="96.4" width="3.6" height="3" rx="0.6" fill="none" stroke="#161616" stroke-width="0.7"/><path d="M524.2 96.4 v-1 a1 1 0 0 1 2 0 v1" fill="none" stroke="#161616" stroke-width="0.6"/><rect x="524.7" y="123.8" width="1.2" height="3.8" fill="#030303"/><rect x="524.7" y="128.4" width="1.2" height="1.2" fill="#030303"/><rect x="370.8" y="139.9" width="159.7" height="40.6" fill="#0a0a0a"/><rect x="387.8" y="146.5" width="122.4" height="28" fill="#090909"/><rect x="387.8" y="146.5" width="5.8" height="5.2" fill="#050505"/><rect x="410.1" y="146.5" width="6" height="5.2" fill="#050505"/><rect x="426.8" y="146.5" width="6.2" height="5.2" rx="2.4" fill="#050505"/><rect x="440.1" y="146.5" width="6.2" height="5.2" rx="2.4" fill="#050505"/><rect x="453.4" y="146.5" width="6.2" height="5.2" rx="2.4" fill="#050505"/><rect x="466.7" y="146.5" width="6.2" height="5.2" rx="2.4" fill="#050505"/><rect x="480.0" y="146.5" width="6.2" height="5.2" rx="2.4" fill="#050505"/><rect x="493.3" y="146.5" width="6.2" height="5.2" rx="2.4" fill="#050505"/><rect x="505.6" y="146.5" width="4.6" height="5.2" fill="#050505"/><rect x="387.8" y="169.2" width="5.8" height="5.2" fill="#050505"/><rect x="410.1" y="169.2" width="6" height="5.2" fill="#050505"/><rect x="426.8" y="169.2" width="6.2" height="5.2" rx="2.4" fill="#050505"/><rect x="440.1" y="169.2" width="6.2" height="5.2" rx="2.4" fill="#050505"/><rect x="453.4" y="169.2" width="6.2" height="5.2" rx="2.4" fill="#050505"/><rect x="466.7" y="169.2" width="6.2" height="5.2" rx="2.4" fill="#050505"/><rect x="480.0" y="169.2" width="6.2" height="5.2" rx="2.4" fill="#050505"/><rect x="493.3" y="169.2" width="6.2" height="5.2" rx="2.4" fill="#050505"/><rect x="505.6" y="169.2" width="4.6" height="5.2" fill="#050505"/><rect x="391.6" y="151.8" width="140.3" height="17.4" fill="#2e2e2e"/><rect x="409.6" y="151.8" width="1" height="17.4" fill="#232323"/><rect x="504.2" y="155.3" width="23" height="10.2" rx="2.6" fill="none" stroke="#252525" stroke-width="0.9"/><rect x="523.4" y="144.5" width="3.6" height="3" rx="0.6" fill="none" stroke="#161616" stroke-width="0.7"/><path d="M524.2 144.5 v-1 a1 1 0 0 1 2 0 v1" fill="none" stroke="#161616" stroke-width="0.6"/><rect x="524.7" y="171.9" width="1.2" height="3.8" fill="#030303"/><rect x="524.7" y="176.5" width="1.2" height="1.2" fill="#030303"/><rect x="370.8" y="183.5" width="159.7" height="40.6" fill="#0a0a0a"/><rect x="387.8" y="190.1" width="122.4" height="28" fill="#090909"/><rect x="387.8" y="190.1" width="5.8" height="5.2" fill="#050505"/><rect x="410.1" y="190.1" width="6" height="5.2" fill="#050505"/><rect x="426.8" y="190.1" width="6.2" height="5.2" rx="2.4" fill="#050505"/><rect x="440.1" y="190.1" width="6.2" height="5.2" rx="2.4" fill="#050505"/><rect x="453.4" y="190.1" width="6.2" height="5.2" rx="2.4" fill="#050505"/><rect x="466.7" y="190.1" width="6.2" height="5.2" rx="2.4" fill="#050505"/><rect x="480.0" y="190.1" width="6.2" height="5.2" rx="2.4" fill="#050505"/><rect x="493.3" y="190.1" width="6.2" height="5.2" rx="2.4" fill="#050505"/><rect x="505.6" y="190.1" width="4.6" height="5.2" fill="#050505"/><rect x="387.8" y="212.8" width="5.8" height="5.2" fill="#050505"/><rect x="410.1" y="212.8" width="6" height="5.2" fill="#050505"/><rect x="426.8" y="212.8" width="6.2" height="5.2" rx="2.4" fill="#050505"/><rect x="440.1" y="212.8" width="6.2" height="5.2" rx="2.4" fill="#050505"/><rect x="453.4" y="212.8" width="6.2" height="5.2" rx="2.4" fill="#050505"/><rect x="466.7" y="212.8" width="6.2" height="5.2" rx="2.4" fill="#050505"/><rect x="480.0" y="212.8" width="6.2" height="5.2" rx="2.4" fill="#050505"/><rect x="493.3" y="212.8" width="6.2" height="5.2" rx="2.4" fill="#050505"/><rect x="505.6" y="212.8" width="4.6" height="5.2" fill="#050505"/><rect x="391.6" y="195.4" width="140.3" height="17.4" fill="#2e2e2e"/><rect x="409.6" y="195.4" width="1" height="17.4" fill="#232323"/><rect x="504.2" y="198.9" width="23" height="10.2" rx="2.6" fill="none" stroke="#252525" stroke-width="0.9"/><rect x="523.4" y="188.1" width="3.6" height="3" rx="0.6" fill="none" stroke="#161616" stroke-width="0.7"/><path d="M524.2 188.1 v-1 a1 1 0 0 1 2 0 v1" fill="none" stroke="#161616" stroke-width="0.6"/><rect x="524.7" y="215.5" width="1.2" height="3.8" fill="#030303"/><rect x="524.7" y="220.1" width="1.2" height="1.2" fill="#030303"/><rect x="370.8" y="227.0" width="159.7" height="40.6" fill="#0a0a0a"/><rect x="387.8" y="233.6" width="122.4" height="28" fill="#090909"/><rect x="387.8" y="233.6" width="5.8" height="5.2" fill="#050505"/><rect x="410.1" y="233.6" width="6" height="5.2" fill="#050505"/><rect x="426.8" y="233.6" width="6.2" height="5.2" rx="2.4" fill="#050505"/><rect x="440.1" y="233.6" width="6.2" height="5.2" rx="2.4" fill="#050505"/><rect x="453.4" y="233.6" width="6.2" height="5.2" rx="2.4" fill="#050505"/><rect x="466.7" y="233.6" width="6.2" height="5.2" rx="2.4" fill="#050505"/><rect x="480.0" y="233.6" width="6.2" height="5.2" rx="2.4" fill="#050505"/><rect x="493.3" y="233.6" width="6.2" height="5.2" rx="2.4" fill="#050505"/><rect x="505.6" y="233.6" width="4.6" height="5.2" fill="#050505"/><rect x="387.8" y="256.3" width="5.8" height="5.2" fill="#050505"/><rect x="410.1" y="256.3" width="6" height="5.2" fill="#050505"/><rect x="426.8" y="256.3" width="6.2" height="5.2" rx="2.4" fill="#050505"/><rect x="440.1" y="256.3" width="6.2" height="5.2" rx="2.4" fill="#050505"/><rect x="453.4" y="256.3" width="6.2" height="5.2" rx="2.4" fill="#050505"/><rect x="466.7" y="256.3" width="6.2" height="5.2" rx="2.4" fill="#050505"/><rect x="480.0" y="256.3" width="6.2" height="5.2" rx="2.4" fill="#050505"/><rect x="493.3" y="256.3" width="6.2" height="5.2" rx="2.4" fill="#050505"/><rect x="505.6" y="256.3" width="4.6" height="5.2" fill="#050505"/><rect x="391.6" y="238.9" width="140.3" height="17.4" fill="#2e2e2e"/><rect x="409.6" y="238.9" width="1" height="17.4" fill="#232323"/><rect x="504.2" y="242.4" width="23" height="10.2" rx="2.6" fill="none" stroke="#252525" stroke-width="0.9"/><rect x="523.4" y="231.6" width="3.6" height="3" rx="0.6" fill="none" stroke="#161616" stroke-width="0.7"/><path d="M524.2 231.6 v-1 a1 1 0 0 1 2 0 v1" fill="none" stroke="#161616" stroke-width="0.6"/><rect x="524.7" y="259.0" width="1.2" height="3.8" fill="#030303"/><rect x="524.7" y="263.6" width="1.2" height="1.2" fill="#030303"/><rect x="537.1" y="5.0" width="159.7" height="40.6" fill="#0a0a0a"/><rect x="554.1" y="11.6" width="122.4" height="28" fill="#090909"/><rect x="554.1" y="11.6" width="5.8" height="5.2" fill="#050505"/><rect x="576.4" y="11.6" width="6" height="5.2" fill="#050505"/><rect x="593.1" y="11.6" width="6.2" height="5.2" rx="2.4" fill="#050505"/><rect x="606.4" y="11.6" width="6.2" height="5.2" rx="2.4" fill="#050505"/><rect x="619.7" y="11.6" width="6.2" height="5.2" rx="2.4" fill="#050505"/><rect x="633.0" y="11.6" width="6.2" height="5.2" rx="2.4" fill="#050505"/><rect x="646.3" y="11.6" width="6.2" height="5.2" rx="2.4" fill="#050505"/><rect x="659.6" y="11.6" width="6.2" height="5.2" rx="2.4" fill="#050505"/><rect x="671.9" y="11.6" width="4.6" height="5.2" fill="#050505"/><rect x="554.1" y="34.3" width="5.8" height="5.2" fill="#050505"/><rect x="576.4" y="34.3" width="6" height="5.2" fill="#050505"/><rect x="593.1" y="34.3" width="6.2" height="5.2" rx="2.4" fill="#050505"/><rect x="606.4" y="34.3" width="6.2" height="5.2" rx="2.4" fill="#050505"/><rect x="619.7" y="34.3" width="6.2" height="5.2" rx="2.4" fill="#050505"/><rect x="633.0" y="34.3" width="6.2" height="5.2" rx="2.4" fill="#050505"/><rect x="646.3" y="34.3" width="6.2" height="5.2" rx="2.4" fill="#050505"/><rect x="659.6" y="34.3" width="6.2" height="5.2" rx="2.4" fill="#050505"/><rect x="671.9" y="34.3" width="4.6" height="5.2" fill="#050505"/><rect x="557.9" y="16.9" width="140.3" height="17.4" fill="#2e2e2e"/><rect x="575.9" y="16.9" width="1" height="17.4" fill="#232323"/><rect x="670.5" y="20.4" width="23" height="10.2" rx="2.6" fill="none" stroke="#252525" stroke-width="0.9"/><rect x="689.7" y="9.6" width="3.6" height="3" rx="0.6" fill="none" stroke="#161616" stroke-width="0.7"/><path d="M690.5 9.6 v-1 a1 1 0 0 1 2 0 v1" fill="none" stroke="#161616" stroke-width="0.6"/><rect x="691.0" y="37.0" width="1.2" height="3.8" fill="#030303"/><rect x="691.0" y="41.6" width="1.2" height="1.2" fill="#030303"/><rect x="537.1" y="48.4" width="159.7" height="40.6" fill="#0a0a0a"/><rect x="554.1" y="55.0" width="122.4" height="28" fill="#090909"/><rect x="554.1" y="55.0" width="5.8" height="5.2" fill="#050505"/><rect x="576.4" y="55.0" width="6" height="5.2" fill="#050505"/><rect x="593.1" y="55.0" width="6.2" height="5.2" rx="2.4" fill="#050505"/><rect x="606.4" y="55.0" width="6.2" height="5.2" rx="2.4" fill="#050505"/><rect x="619.7" y="55.0" width="6.2" height="5.2" rx="2.4" fill="#050505"/><rect x="633.0" y="55.0" width="6.2" height="5.2" rx="2.4" fill="#050505"/><rect x="646.3" y="55.0" width="6.2" height="5.2" rx="2.4" fill="#050505"/><rect x="659.6" y="55.0" width="6.2" height="5.2" rx="2.4" fill="#050505"/><rect x="671.9" y="55.0" width="4.6" height="5.2" fill="#050505"/><rect x="554.1" y="77.7" width="5.8" height="5.2" fill="#050505"/><rect x="576.4" y="77.7" width="6" height="5.2" fill="#050505"/><rect x="593.1" y="77.7" width="6.2" height="5.2" rx="2.4" fill="#050505"/><rect x="606.4" y="77.7" width="6.2" height="5.2" rx="2.4" fill="#050505"/><rect x="619.7" y="77.7" width="6.2" height="5.2" rx="2.4" fill="#050505"/><rect x="633.0" y="77.7" width="6.2" height="5.2" rx="2.4" fill="#050505"/><rect x="646.3" y="77.7" width="6.2" height="5.2" rx="2.4" fill="#050505"/><rect x="659.6" y="77.7" width="6.2" height="5.2" rx="2.4" fill="#050505"/><rect x="671.9" y="77.7" width="4.6" height="5.2" fill="#050505"/><rect x="557.9" y="60.3" width="140.3" height="17.4" fill="#2e2e2e"/><rect x="575.9" y="60.3" width="1" height="17.4" fill="#232323"/><rect x="670.5" y="63.8" width="23" height="10.2" rx="2.6" fill="none" stroke="#252525" stroke-width="0.9"/><rect x="689.7" y="53.0" width="3.6" height="3" rx="0.6" fill="none" stroke="#161616" stroke-width="0.7"/><path d="M690.5 53.0 v-1 a1 1 0 0 1 2 0 v1" fill="none" stroke="#161616" stroke-width="0.6"/><rect x="691.0" y="80.4" width="1.2" height="3.8" fill="#030303"/><rect x="691.0" y="85.0" width="1.2" height="1.2" fill="#030303"/><rect x="537.1" y="91.8" width="159.7" height="40.6" fill="#0a0a0a"/><rect x="554.1" y="98.4" width="122.4" height="28" fill="#090909"/><rect x="554.1" y="98.4" width="5.8" height="5.2" fill="#050505"/><rect x="576.4" y="98.4" width="6" height="5.2" fill="#050505"/><rect x="593.1" y="98.4" width="6.2" height="5.2" rx="2.4" fill="#050505"/><rect x="606.4" y="98.4" width="6.2" height="5.2" rx="2.4" fill="#050505"/><rect x="619.7" y="98.4" width="6.2" height="5.2" rx="2.4" fill="#050505"/><rect x="633.0" y="98.4" width="6.2" height="5.2" rx="2.4" fill="#050505"/><rect x="646.3" y="98.4" width="6.2" height="5.2" rx="2.4" fill="#050505"/><rect x="659.6" y="98.4" width="6.2" height="5.2" rx="2.4" fill="#050505"/><rect x="671.9" y="98.4" width="4.6" height="5.2" fill="#050505"/><rect x="554.1" y="121.1" width="5.8" height="5.2" fill="#050505"/><rect x="576.4" y="121.1" width="6" height="5.2" fill="#050505"/><rect x="593.1" y="121.1" width="6.2" height="5.2" rx="2.4" fill="#050505"/><rect x="606.4" y="121.1" width="6.2" height="5.2" rx="2.4" fill="#050505"/><rect x="619.7" y="121.1" width="6.2" height="5.2" rx="2.4" fill="#050505"/><rect x="633.0" y="121.1" width="6.2" height="5.2" rx="2.4" fill="#050505"/><rect x="646.3" y="121.1" width="6.2" height="5.2" rx="2.4" fill="#050505"/><rect x="659.6" y="121.1" width="6.2" height="5.2" rx="2.4" fill="#050505"/><rect x="671.9" y="121.1" width="4.6" height="5.2" fill="#050505"/><rect x="557.9" y="103.7" width="140.3" height="17.4" fill="#2e2e2e"/><rect x="575.9" y="103.7" width="1" height="17.4" fill="#232323"/><rect x="670.5" y="107.2" width="23" height="10.2" rx="2.6" fill="none" stroke="#252525" stroke-width="0.9"/><rect x="689.7" y="96.4" width="3.6" height="3" rx="0.6" fill="none" stroke="#161616" stroke-width="0.7"/><path d="M690.5 96.4 v-1 a1 1 0 0 1 2 0 v1" fill="none" stroke="#161616" stroke-width="0.6"/><rect x="691.0" y="123.8" width="1.2" height="3.8" fill="#030303"/><rect x="691.0" y="128.4" width="1.2" height="1.2" fill="#030303"/><rect x="537.1" y="139.9" width="159.7" height="40.6" fill="#0a0a0a"/><rect x="554.1" y="146.5" width="122.4" height="28" fill="#090909"/><rect x="554.1" y="146.5" width="5.8" height="5.2" fill="#050505"/><rect x="576.4" y="146.5" width="6" height="5.2" fill="#050505"/><rect x="593.1" y="146.5" width="6.2" height="5.2" rx="2.4" fill="#050505"/><rect x="606.4" y="146.5" width="6.2" height="5.2" rx="2.4" fill="#050505"/><rect x="619.7" y="146.5" width="6.2" height="5.2" rx="2.4" fill="#050505"/><rect x="633.0" y="146.5" width="6.2" height="5.2" rx="2.4" fill="#050505"/><rect x="646.3" y="146.5" width="6.2" height="5.2" rx="2.4" fill="#050505"/><rect x="659.6" y="146.5" width="6.2" height="5.2" rx="2.4" fill="#050505"/><rect x="671.9" y="146.5" width="4.6" height="5.2" fill="#050505"/><rect x="554.1" y="169.2" width="5.8" height="5.2" fill="#050505"/><rect x="576.4" y="169.2" width="6" height="5.2" fill="#050505"/><rect x="593.1" y="169.2" width="6.2" height="5.2" rx="2.4" fill="#050505"/><rect x="606.4" y="169.2" width="6.2" height="5.2" rx="2.4" fill="#050505"/><rect x="619.7" y="169.2" width="6.2" height="5.2" rx="2.4" fill="#050505"/><rect x="633.0" y="169.2" width="6.2" height="5.2" rx="2.4" fill="#050505"/><rect x="646.3" y="169.2" width="6.2" height="5.2" rx="2.4" fill="#050505"/><rect x="659.6" y="169.2" width="6.2" height="5.2" rx="2.4" fill="#050505"/><rect x="671.9" y="169.2" width="4.6" height="5.2" fill="#050505"/><rect x="557.9" y="151.8" width="140.3" height="17.4" fill="#2e2e2e"/><rect x="575.9" y="151.8" width="1" height="17.4" fill="#232323"/><rect x="670.5" y="155.3" width="23" height="10.2" rx="2.6" fill="none" stroke="#252525" stroke-width="0.9"/><rect x="689.7" y="144.5" width="3.6" height="3" rx="0.6" fill="none" stroke="#161616" stroke-width="0.7"/><path d="M690.5 144.5 v-1 a1 1 0 0 1 2 0 v1" fill="none" stroke="#161616" stroke-width="0.6"/><rect x="691.0" y="171.9" width="1.2" height="3.8" fill="#030303"/><rect x="691.0" y="176.5" width="1.2" height="1.2" fill="#030303"/><rect x="537.1" y="183.5" width="159.7" height="40.6" fill="#0a0a0a"/><rect x="554.1" y="190.1" width="122.4" height="28" fill="#090909"/><rect x="554.1" y="190.1" width="5.8" height="5.2" fill="#050505"/><rect x="576.4" y="190.1" width="6" height="5.2" fill="#050505"/><rect x="593.1" y="190.1" width="6.2" height="5.2" rx="2.4" fill="#050505"/><rect x="606.4" y="190.1" width="6.2" height="5.2" rx="2.4" fill="#050505"/><rect x="619.7" y="190.1" width="6.2" height="5.2" rx="2.4" fill="#050505"/><rect x="633.0" y="190.1" width="6.2" height="5.2" rx="2.4" fill="#050505"/><rect x="646.3" y="190.1" width="6.2" height="5.2" rx="2.4" fill="#050505"/><rect x="659.6" y="190.1" width="6.2" height="5.2" rx="2.4" fill="#050505"/><rect x="671.9" y="190.1" width="4.6" height="5.2" fill="#050505"/><rect x="554.1" y="212.8" width="5.8" height="5.2" fill="#050505"/><rect x="576.4" y="212.8" width="6" height="5.2" fill="#050505"/><rect x="593.1" y="212.8" width="6.2" height="5.2" rx="2.4" fill="#050505"/><rect x="606.4" y="212.8" width="6.2" height="5.2" rx="2.4" fill="#050505"/><rect x="619.7" y="212.8" width="6.2" height="5.2" rx="2.4" fill="#050505"/><rect x="633.0" y="212.8" width="6.2" height="5.2" rx="2.4" fill="#050505"/><rect x="646.3" y="212.8" width="6.2" height="5.2" rx="2.4" fill="#050505"/><rect x="659.6" y="212.8" width="6.2" height="5.2" rx="2.4" fill="#050505"/><rect x="671.9" y="212.8" width="4.6" height="5.2" fill="#050505"/><rect x="557.9" y="195.4" width="140.3" height="17.4" fill="#2e2e2e"/><rect x="575.9" y="195.4" width="1" height="17.4" fill="#232323"/><rect x="670.5" y="198.9" width="23" height="10.2" rx="2.6" fill="none" stroke="#252525" stroke-width="0.9"/><rect x="689.7" y="188.1" width="3.6" height="3" rx="0.6" fill="none" stroke="#161616" stroke-width="0.7"/><path d="M690.5 188.1 v-1 a1 1 0 0 1 2 0 v1" fill="none" stroke="#161616" stroke-width="0.6"/><rect x="691.0" y="215.5" width="1.2" height="3.8" fill="#030303"/><rect x="691.0" y="220.1" width="1.2" height="1.2" fill="#030303"/><rect x="537.1" y="227.0" width="159.7" height="40.6" fill="#0a0a0a"/><rect x="554.1" y="233.6" width="122.4" height="28" fill="#090909"/><rect x="554.1" y="233.6" width="5.8" height="5.2" fill="#050505"/><rect x="576.4" y="233.6" width="6" height="5.2" fill="#050505"/><rect x="593.1" y="233.6" width="6.2" height="5.2" rx="2.4" fill="#050505"/><rect x="606.4" y="233.6" width="6.2" height="5.2" rx="2.4" fill="#050505"/><rect x="619.7" y="233.6" width="6.2" height="5.2" rx="2.4" fill="#050505"/><rect x="633.0" y="233.6" width="6.2" height="5.2" rx="2.4" fill="#050505"/><rect x="646.3" y="233.6" width="6.2" height="5.2" rx="2.4" fill="#050505"/><rect x="659.6" y="233.6" width="6.2" height="5.2" rx="2.4" fill="#050505"/><rect x="671.9" y="233.6" width="4.6" height="5.2" fill="#050505"/><rect x="554.1" y="256.3" width="5.8" height="5.2" fill="#050505"/><rect x="576.4" y="256.3" width="6" height="5.2" fill="#050505"/><rect x="593.1" y="256.3" width="6.2" height="5.2" rx="2.4" fill="#050505"/><rect x="606.4" y="256.3" width="6.2" height="5.2" rx="2.4" fill="#050505"/><rect x="619.7" y="256.3" width="6.2" height="5.2" rx="2.4" fill="#050505"/><rect x="633.0" y="256.3" width="6.2" height="5.2" rx="2.4" fill="#050505"/><rect x="646.3" y="256.3" width="6.2" height="5.2" rx="2.4" fill="#050505"/><rect x="659.6" y="256.3" width="6.2" height="5.2" rx="2.4" fill="#050505"/><rect x="671.9" y="256.3" width="4.6" height="5.2" fill="#050505"/><rect x="557.9" y="238.9" width="140.3" height="17.4" fill="#2e2e2e"/><rect x="575.9" y="238.9" width="1" height="17.4" fill="#232323"/><rect x="670.5" y="242.4" width="23" height="10.2" rx="2.6" fill="none" stroke="#252525" stroke-width="0.9"/><rect x="689.7" y="231.6" width="3.6" height="3" rx="0.6" fill="none" stroke="#161616" stroke-width="0.7"/><path d="M690.5 231.6 v-1 a1 1 0 0 1 2 0 v1" fill="none" stroke="#161616" stroke-width="0.6"/><rect x="691.0" y="259.0" width="1.2" height="3.8" fill="#030303"/><rect x="691.0" y="263.6" width="1.2" height="1.2" fill="#030303"/><rect x="32" y="0" width="5" height="269" fill="#1c1c1c"/><rect x="0.0" y="0" width="32" height="269" fill="#2a2a2a"/><rect x="0.0" y="180" width="32" height="1.6" fill="#0b0b0b"/><rect x="0.0" y="243" width="32" height="1.6" fill="#0b0b0b"/><rect x="0.0" y="20" width="29.0" height="64" fill="#303030" opacity="0.6"/><text x="0.9" y="17.6" font-size="7.9" textLength="27.8" lengthAdjust="spacingAndGlyphs" fill="#cfcfcf">CTRL1 T</text><circle cx="8.5" cy="28.1" r="5.1" fill="#a2a2a2"/><circle cx="8.5" cy="37.8" r="2.7" fill="none" stroke="#a2a2a2" stroke-width="0.7"/><path d="M6.5 36.6 l2 1.6 l2 -1.6 M8.5 38.2 v2" fill="none" stroke="#a2a2a2" stroke-width="0.6"/><circle cx="8.5" cy="53.2" r="2.7" fill="none" stroke="#a2a2a2" stroke-width="0.7"/><path d="M6.7 54 q1.8 1.6 3.6 0" fill="none" stroke="#a2a2a2" stroke-width="0.6"/><circle cx="8.5" cy="59.5" r="2.3" fill="#0b0b0b"/><text x="4.9" y="68.8" font-size="7.6" textLength="6.7" lengthAdjust="spacingAndGlyphs" fill="#cfcfcf">ID</text><circle cx="8.5" cy="76" r="5.1" fill="#a2a2a2"/><circle cx="25.2" cy="28.1" r="1.9" fill="#c4c4c4"/><circle cx="25.2" cy="40" r="1.9" fill="#c4c4c4"/><circle cx="25.2" cy="51.8" r="1.9" fill="#c4c4c4"/><path d="M23.2 36.2 l2 -3.6 l2 3.6 z" fill="none" stroke="#6a6a6a" stroke-width="0.5"/><path d="M23.0 46 h4.4 M23.8 47.8 h2.8 M25.2 44.6 v1.4" fill="none" stroke="#6a6a6a" stroke-width="0.5"/><path d="M23.0 59 v-2.4 h4.4 v2.4 M22.8 60.6 h1.6 M26.0 60.6 h1.6" fill="none" stroke="#6a6a6a" stroke-width="0.5"/><rect x="16" y="181.6" width="16" height="61.4" fill="#000" opacity="0.12"/><rect x="19" y="99" width="9.5" height="46.5" fill="#000" opacity="0.12"/><rect x="31.4" y="99" width="5" height="46.5" fill="#fff" opacity="0.05"/><rect x="32.3" y="28" width="4.2" height="31.5" fill="#0b0b0b"/><rect x="703.6" y="0" width="2.4" height="269" fill="#0b0b0b"/><rect x="706" y="0" width="4.4" height="269" fill="#1c1c1c"/><rect x="706" y="22.7" width="4.2" height="21.8" fill="#fff" opacity="0.04"/><rect x="706" y="44.5" width="4.2" height="15.2" fill="#0b0b0b"/><g transform="translate(710.3 0)"><rect x="0.0" y="0" width="32" height="269" fill="#2a2a2a"/><rect x="0.0" y="180" width="32" height="1.6" fill="#0b0b0b"/><rect x="0.0" y="243" width="32" height="1.6" fill="#0b0b0b"/><rect x="2.1" y="20" width="29.6" height="64" fill="#303030" opacity="0.6"/><text x="3.0" y="17.6" font-size="7.9" textLength="27.8" lengthAdjust="spacingAndGlyphs" fill="#cfcfcf">CTRL2 T</text><circle cx="10.6" cy="28.1" r="5.1" fill="#a2a2a2"/><circle cx="10.6" cy="37.8" r="2.7" fill="none" stroke="#a2a2a2" stroke-width="0.7"/><path d="M8.6 36.6 l2 1.6 l2 -1.6 M10.6 38.2 v2" fill="none" stroke="#a2a2a2" stroke-width="0.6"/><circle cx="10.6" cy="53.2" r="2.7" fill="none" stroke="#a2a2a2" stroke-width="0.7"/><path d="M8.8 54 q1.8 1.6 3.6 0" fill="none" stroke="#a2a2a2" stroke-width="0.6"/><circle cx="10.6" cy="59.5" r="2.3" fill="#0b0b0b"/><text x="7.0" y="68.8" font-size="7.6" textLength="6.7" lengthAdjust="spacingAndGlyphs" fill="#cfcfcf">ID</text><circle cx="10.6" cy="76" r="5.1" fill="#a2a2a2"/><circle cx="27.3" cy="28.1" r="1.9" fill="#c4c4c4"/><circle cx="27.3" cy="40" r="1.9" fill="#c4c4c4"/><circle cx="27.3" cy="51.8" r="1.9" fill="#c4c4c4"/><path d="M25.3 36.2 l2 -3.6 l2 3.6 z" fill="none" stroke="#6a6a6a" stroke-width="0.5"/><path d="M25.1 46 h4.4 M25.9 47.8 h2.8 M27.3 44.6 v1.4" fill="none" stroke="#6a6a6a" stroke-width="0.5"/><path d="M25.1 59 v-2.4 h4.4 v2.4 M24.9 60.6 h1.6 M28.1 60.6 h1.6" fill="none" stroke="#6a6a6a" stroke-width="0.5"/></g><rect x="710" y="181.6" width="19" height="61.4" fill="#000" opacity="0.08"/><rect x="37.1" y="3.6" width="163.4" height="44" rx="2.6" fill="none" stroke="#cdcdcd" stroke-width="1.3"/><rect x="38.4" y="4.9" width="160.8" height="41.4" rx="1.4" fill="none" stroke="#0095d5" stroke-width="1.2"/></svg></div>
<div class="abs" style="left:1046px;top:513px;width:10px;height:10px;border-radius:50%;background:#dedede"></div>
<div class="abs" style="left:1046px;top:537px;width:10px;height:10px;border-radius:50%;background:#0095d5"></div>
<div class="abs" style="left:1061px;top:527px;width:23px;height:1px;background:#8a8a8a"></div>
<div class="abs" style="left:1061px;top:551px;width:22px;height:1px;background:#8a8a8a"></div>
<div class="btn" style="left:531px;top:817px;width:64px;height:36px"></div>
<div class="btn" style="left:600px;top:817px;width:64px;height:36px"></div>

<!-- details -->
<div class="abs" style="left:16px;top:914px;width:1162px;height:1px;background:#363636"></div>
<div class="abs" style="left:300px;top:915px;width:1px;height:250px;background:#363636"></div>
<div class="abs" style="left:32px;top:875px;width:30px;height:30px;border-radius:50%;background:#0095d5;box-shadow:0 3px 5px -1px rgba(0,0,0,.2),0 6px 10px 0 rgba(0,0,0,.14),0 1px 18px 0 rgba(0,0,0,.12)"></div>
<svg style="left:0;top:0" width="1" height="1"><path transform="translate(36.34 879.46) scale(0.87)" d="M15.41,16.58L10.83,12L15.41,7.41L14,6L8,12L14,18L15.41,16.58Z" fill="#fff"/></svg>

<div class="abs" style="left:122px;top:942px;width:72px;height:80px;border:1px solid #999;border-radius:4px;background:#1c1c1c;overflow:hidden">
  <div class="abs" style="left:0;top:0;width:70px;height:16.5px;background:#555"></div>
  <div class="abs" style="left:0;bottom:0;width:70px;height:16.5px;background:#555"></div>
</div>
<svg style="left:0;top:0" width="1" height="1"><path transform="translate(135.8 961.4) scale(1.715 1.745)" d="M6,2H18A2,2 0 0,1 20,4V20A2,2 0 0,1 18,22H6A2,2 0 0,1 4,20V4A2,2 0 0,1 6,2M12,4A6,6 0 0,0 6,10C6,13.31 8.69,16 12.1,16L11.22,13.77C10.95,13.29 11.11,12.68 11.59,12.4L12.45,11.9C12.93,11.63 13.54,11.79 13.82,12.27L15.74,14.69C17.12,13.59 18,11.9 18,10A6,6 0 0,0 12,4M12,9A1,1 0 0,1 13,10A1,1 0 0,1 12,11A1,1 0 0,1 11,10A1,1 0 0,1 12,9M7,18A1,1 0 0,0 6,19A1,1 0 0,0 7,20A1,1 0 0,0 8,19A1,1 0 0,0 7,18M12.09,13.27L14.58,19.58L17.17,18.08L12.95,12.77L12.09,13.27Z" fill="#909090"/></svg>
<svg style="left:0;top:0" width="1" height="1"><path transform="translate(81.5 1060.9) scale(1.02)" d="M12,2C9.76,2 7.78,3.05 6.5,4.68L7.93,6.11C8.84,4.84 10.32,4 12,4A5,5 0 0,1 17,9C17,10.68 16.16,12.16 14.89,13.06L16.31,14.5C17.94,13.21 19,11.24 19,9A7,7 0 0,0 12,2M3.28,4L2,5.27L5.04,8.3C5,8.53 5,8.76 5,9C5,11.38 6.19,13.47 8,14.74V17A1,1 0 0,0 9,18H14.73L18.73,22L20,20.72L3.28,4M7.23,10.5L12.73,16H10V13.58C8.68,13 7.66,11.88 7.23,10.5M9,20V21A1,1 0 0,0 10,22H14A1,1 0 0,0 15,21V20H9Z" fill="#e6e6e6"/></svg>
<div class="btn" style="left:125px;top:1090px;width:66px;height:36px"></div>

<!-- side panel -->
<div class="abs" style="left:1184px;top:126px;width:240px;height:303px;background:#282828;border:1px solid #363636;border-left:none;box-shadow:0 2px 1px -1px rgba(0,0,0,.2),0 1px 1px rgba(0,0,0,.14),0 1px 3px rgba(0,0,0,.12)"></div>
<div class="abs" style="left:1184px;top:126px;width:4px;height:148px;background:#0095d5"></div>
<div class="abs" style="left:1184px;top:274px;width:1px;height:155px;background:#353535"></div>
<div class="abs" style="left:1188px;top:274px;width:235px;height:1px;background:#353535"></div>
<div class="abs" style="left:1204px;top:149px;width:203px;height:74px"><svg class="th1" width="203" height="73.6" viewBox="0 0 742 269" font-family='"Liberation Sans", sans-serif'><rect x="36" y="0.5" width="670" height="267.5" fill="#050505"/><rect x="36" y="0" width="670" height="2.6" fill="#1a1a1a"/><rect x="198.0" y="3" width="6.5" height="264.6" fill="#111111"/><rect x="364.2" y="3" width="6.5" height="264.6" fill="#111111"/><rect x="530.5" y="3" width="6.5" height="264.6" fill="#111111"/><rect x="696.9" y="3" width="6.5" height="264.6" fill="#111111"/><rect x="199.2" y="11.8" width="4.2" height="4.6" fill="#0b0b0b"/><rect x="199.2" y="34.5" width="4.2" height="4.6" fill="#0b0b0b"/><rect x="199.2" y="55.2" width="4.2" height="4.6" fill="#0b0b0b"/><rect x="199.2" y="77.9" width="4.2" height="4.6" fill="#0b0b0b"/><rect x="199.2" y="98.6" width="4.2" height="4.6" fill="#0b0b0b"/><rect x="199.2" y="121.3" width="4.2" height="4.6" fill="#0b0b0b"/><rect x="199.2" y="146.7" width="4.2" height="4.6" fill="#0b0b0b"/><rect x="199.2" y="169.4" width="4.2" height="4.6" fill="#0b0b0b"/><rect x="199.2" y="190.3" width="4.2" height="4.6" fill="#0b0b0b"/><rect x="199.2" y="213.0" width="4.2" height="4.6" fill="#0b0b0b"/><rect x="199.2" y="233.8" width="4.2" height="4.6" fill="#0b0b0b"/><rect x="199.2" y="256.5" width="4.2" height="4.6" fill="#0b0b0b"/><rect x="365.4" y="11.8" width="4.2" height="4.6" fill="#0b0b0b"/><rect x="365.4" y="34.5" width="4.2" height="4.6" fill="#0b0b0b"/><rect x="365.4" y="55.2" width="4.2" height="4.6" fill="#0b0b0b"/><rect x="365.4" y="77.9" width="4.2" height="4.6" fill="#0b0b0b"/><rect x="365.4" y="98.6" width="4.2" height="4.6" fill="#0b0b0b"/><rect x="365.4" y="121.3" width="4.2" height="4.6" fill="#0b0b0b"/><rect x="365.4" y="146.7" width="4.2" height="4.6" fill="#0b0b0b"/><rect x="365.4" y="169.4" width="4.2" height="4.6" fill="#0b0b0b"/><rect x="365.4" y="190.3" width="4.2" height="4.6" fill="#0b0b0b"/><rect x="365.4" y="213.0" width="4.2" height="4.6" fill="#0b0b0b"/><rect x="365.4" y="233.8" width="4.2" height="4.6" fill="#0b0b0b"/><rect x="365.4" y="256.5" width="4.2" height="4.6" fill="#0b0b0b"/><rect x="531.7" y="11.8" width="4.2" height="4.6" fill="#0b0b0b"/><rect x="531.7" y="34.5" width="4.2" height="4.6" fill="#0b0b0b"/><rect x="531.7" y="55.2" width="4.2" height="4.6" fill="#0b0b0b"/><rect x="531.7" y="77.9" width="4.2" height="4.6" fill="#0b0b0b"/><rect x="531.7" y="98.6" width="4.2" height="4.6" fill="#0b0b0b"/><rect x="531.7" y="121.3" width="4.2" height="4.6" fill="#0b0b0b"/><rect x="531.7" y="146.7" width="4.2" height="4.6" fill="#0b0b0b"/><rect x="531.7" y="169.4" width="4.2" height="4.6" fill="#0b0b0b"/><rect x="531.7" y="190.3" width="4.2" height="4.6" fill="#0b0b0b"/><rect x="531.7" y="213.0" width="4.2" height="4.6" fill="#0b0b0b"/><rect x="531.7" y="233.8" width="4.2" height="4.6" fill="#0b0b0b"/><rect x="531.7" y="256.5" width="4.2" height="4.6" fill="#0b0b0b"/><rect x="698.1" y="11.8" width="4.2" height="4.6" fill="#0b0b0b"/><rect x="698.1" y="34.5" width="4.2" height="4.6" fill="#0b0b0b"/><rect x="698.1" y="55.2" width="4.2" height="4.6" fill="#0b0b0b"/><rect x="698.1" y="77.9" width="4.2" height="4.6" fill="#0b0b0b"/><rect x="698.1" y="98.6" width="4.2" height="4.6" fill="#0b0b0b"/><rect x="698.1" y="121.3" width="4.2" height="4.6" fill="#0b0b0b"/><rect x="698.1" y="146.7" width="4.2" height="4.6" fill="#0b0b0b"/><rect x="698.1" y="169.4" width="4.2" height="4.6" fill="#0b0b0b"/><rect x="698.1" y="190.3" width="4.2" height="4.6" fill="#0b0b0b"/><rect x="698.1" y="213.0" width="4.2" height="4.6" fill="#0b0b0b"/><rect x="698.1" y="233.8" width="4.2" height="4.6" fill="#0b0b0b"/><rect x="698.1" y="256.5" width="4.2" height="4.6" fill="#0b0b0b"/><rect x="37" y="134.3" width="669" height="1.4" fill="#111111"/><rect x="38.2" y="5.0" width="159.7" height="40.6" fill="#0c0c0c"/><rect x="55.2" y="11.6" width="122.4" height="28" fill="#080808"/><rect x="55.2" y="11.6" width="5.8" height="5.2" fill="#050505"/><rect x="77.5" y="11.6" width="6" height="5.2" fill="#050505"/><rect x="94.2" y="11.6" width="6.2" height="5.2" rx="2.4" fill="#050505"/><rect x="107.5" y="11.6" width="6.2" height="5.2" rx="2.4" fill="#050505"/><rect x="120.8" y="11.6" width="6.2" height="5.2" rx="2.4" fill="#050505"/><rect x="134.1" y="11.6" width="6.2" height="5.2" rx="2.4" fill="#050505"/><rect x="147.4" y="11.6" width="6.2" height="5.2" rx="2.4" fill="#050505"/><rect x="160.7" y="11.6" width="6.2" height="5.2" rx="2.4" fill="#050505"/><rect x="173.0" y="11.6" width="4.6" height="5.2" fill="#050505"/><rect x="55.2" y="34.3" width="5.8" height="5.2" fill="#050505"/><rect x="77.5" y="34.3" width="6" height="5.2" fill="#050505"/><rect x="94.2" y="34.3" width="6.2" height="5.2" rx="2.4" fill="#050505"/><rect x="107.5" y="34.3" width="6.2" height="5.2" rx="2.4" fill="#050505"/><rect x="120.8" y="34.3" width="6.2" height="5.2" rx="2.4" fill="#050505"/><rect x="134.1" y="34.3" width="6.2" height="5.2" rx="2.4" fill="#050505"/><rect x="147.4" y="34.3" width="6.2" height="5.2" rx="2.4" fill="#050505"/><rect x="160.7" y="34.3" width="6.2" height="5.2" rx="2.4" fill="#050505"/><rect x="173.0" y="34.3" width="4.6" height="5.2" fill="#050505"/><rect x="59.0" y="16.9" width="140.3" height="17.4" fill="#5aa83c"/><rect x="77.0" y="16.9" width="1" height="17.4" fill="#3f7f2a"/><rect x="171.6" y="20.4" width="23" height="10.2" rx="2.6" fill="none" stroke="#3f7f2a" stroke-width="0.9"/><rect x="190.8" y="9.6" width="3.6" height="3" rx="0.6" fill="none" stroke="#1a1a1a" stroke-width="0.7"/><path d="M191.6 9.6 v-1 a1 1 0 0 1 2 0 v1" fill="none" stroke="#1a1a1a" stroke-width="0.6"/><rect x="192.1" y="37.0" width="1.2" height="3.8" fill="#030303"/><rect x="192.1" y="41.6" width="1.2" height="1.2" fill="#030303"/><rect x="38.2" y="48.4" width="159.7" height="40.6" fill="#050505"/><rect x="55.2" y="55.0" width="122.4" height="28" fill="#050505"/><rect x="55.2" y="55.0" width="5.8" height="5.2" fill="#030303"/><rect x="77.5" y="55.0" width="6" height="5.2" fill="#030303"/><rect x="94.2" y="55.0" width="6.2" height="5.2" rx="2.4" fill="#030303"/><rect x="107.5" y="55.0" width="6.2" height="5.2" rx="2.4" fill="#030303"/><rect x="120.8" y="55.0" width="6.2" height="5.2" rx="2.4" fill="#030303"/><rect x="134.1" y="55.0" width="6.2" height="5.2" rx="2.4" fill="#030303"/><rect x="147.4" y="55.0" width="6.2" height="5.2" rx="2.4" fill="#030303"/><rect x="160.7" y="55.0" width="6.2" height="5.2" rx="2.4" fill="#030303"/><rect x="173.0" y="55.0" width="4.6" height="5.2" fill="#030303"/><rect x="55.2" y="77.7" width="5.8" height="5.2" fill="#030303"/><rect x="77.5" y="77.7" width="6" height="5.2" fill="#030303"/><rect x="94.2" y="77.7" width="6.2" height="5.2" rx="2.4" fill="#030303"/><rect x="107.5" y="77.7" width="6.2" height="5.2" rx="2.4" fill="#030303"/><rect x="120.8" y="77.7" width="6.2" height="5.2" rx="2.4" fill="#030303"/><rect x="134.1" y="77.7" width="6.2" height="5.2" rx="2.4" fill="#030303"/><rect x="147.4" y="77.7" width="6.2" height="5.2" rx="2.4" fill="#030303"/><rect x="160.7" y="77.7" width="6.2" height="5.2" rx="2.4" fill="#030303"/><rect x="173.0" y="77.7" width="4.6" height="5.2" fill="#030303"/><rect x="59.0" y="60.3" width="140.3" height="17.4" fill="#171717"/><rect x="77.0" y="60.3" width="1" height="17.4" fill="#0c0c0c"/><rect x="171.6" y="63.8" width="23" height="10.2" rx="2.6" fill="none" stroke="#0e0e0e" stroke-width="0.9"/><rect x="190.8" y="53.0" width="3.6" height="3" rx="0.6" fill="none" stroke="#0a0a0a" stroke-width="0.7"/><path d="M191.6 53.0 v-1 a1 1 0 0 1 2 0 v1" fill="none" stroke="#0a0a0a" stroke-width="0.6"/><rect x="192.1" y="80.4" width="1.2" height="3.8" fill="#020202"/><rect x="192.1" y="85.0" width="1.2" height="1.2" fill="#020202"/><rect x="38.2" y="91.8" width="159.7" height="40.6" fill="#050505"/><rect x="55.2" y="98.4" width="122.4" height="28" fill="#050505"/><rect x="55.2" y="98.4" width="5.8" height="5.2" fill="#030303"/><rect x="77.5" y="98.4" width="6" height="5.2" fill="#030303"/><rect x="94.2" y="98.4" width="6.2" height="5.2" rx="2.4" fill="#030303"/><rect x="107.5" y="98.4" width="6.2" height="5.2" rx="2.4" fill="#030303"/><rect x="120.8" y="98.4" width="6.2" height="5.2" rx="2.4" fill="#030303"/><rect x="134.1" y="98.4" width="6.2" height="5.2" rx="2.4" fill="#030303"/><rect x="147.4" y="98.4" width="6.2" height="5.2" rx="2.4" fill="#030303"/><rect x="160.7" y="98.4" width="6.2" height="5.2" rx="2.4" fill="#030303"/><rect x="173.0" y="98.4" width="4.6" height="5.2" fill="#030303"/><rect x="55.2" y="121.1" width="5.8" height="5.2" fill="#030303"/><rect x="77.5" y="121.1" width="6" height="5.2" fill="#030303"/><rect x="94.2" y="121.1" width="6.2" height="5.2" rx="2.4" fill="#030303"/><rect x="107.5" y="121.1" width="6.2" height="5.2" rx="2.4" fill="#030303"/><rect x="120.8" y="121.1" width="6.2" height="5.2" rx="2.4" fill="#030303"/><rect x="134.1" y="121.1" width="6.2" height="5.2" rx="2.4" fill="#030303"/><rect x="147.4" y="121.1" width="6.2" height="5.2" rx="2.4" fill="#030303"/><rect x="160.7" y="121.1" width="6.2" height="5.2" rx="2.4" fill="#030303"/><rect x="173.0" y="121.1" width="4.6" height="5.2" fill="#030303"/><rect x="59.0" y="103.7" width="140.3" height="17.4" fill="#171717"/><rect x="77.0" y="103.7" width="1" height="17.4" fill="#0c0c0c"/><rect x="171.6" y="107.2" width="23" height="10.2" rx="2.6" fill="none" stroke="#0e0e0e" stroke-width="0.9"/><rect x="190.8" y="96.4" width="3.6" height="3" rx="0.6" fill="none" stroke="#0a0a0a" stroke-width="0.7"/><path d="M191.6 96.4 v-1 a1 1 0 0 1 2 0 v1" fill="none" stroke="#0a0a0a" stroke-width="0.6"/><rect x="192.1" y="123.8" width="1.2" height="3.8" fill="#020202"/><rect x="192.1" y="128.4" width="1.2" height="1.2" fill="#020202"/><rect x="38.2" y="139.9" width="159.7" height="40.6" fill="#050505"/><rect x="55.2" y="146.5" width="122.4" height="28" fill="#050505"/><rect x="55.2" y="146.5" width="5.8" height="5.2" fill="#030303"/><rect x="77.5" y="146.5" width="6" height="5.2" fill="#030303"/><rect x="94.2" y="146.5" width="6.2" height="5.2" rx="2.4" fill="#030303"/><rect x="107.5" y="146.5" width="6.2" height="5.2" rx="2.4" fill="#030303"/><rect x="120.8" y="146.5" width="6.2" height="5.2" rx="2.4" fill="#030303"/><rect x="134.1" y="146.5" width="6.2" height="5.2" rx="2.4" fill="#030303"/><rect x="147.4" y="146.5" width="6.2" height="5.2" rx="2.4" fill="#030303"/><rect x="160.7" y="146.5" width="6.2" height="5.2" rx="2.4" fill="#030303"/><rect x="173.0" y="146.5" width="4.6" height="5.2" fill="#030303"/><rect x="55.2" y="169.2" width="5.8" height="5.2" fill="#030303"/><rect x="77.5" y="169.2" width="6" height="5.2" fill="#030303"/><rect x="94.2" y="169.2" width="6.2" height="5.2" rx="2.4" fill="#030303"/><rect x="107.5" y="169.2" width="6.2" height="5.2" rx="2.4" fill="#030303"/><rect x="120.8" y="169.2" width="6.2" height="5.2" rx="2.4" fill="#030303"/><rect x="134.1" y="169.2" width="6.2" height="5.2" rx="2.4" fill="#030303"/><rect x="147.4" y="169.2" width="6.2" height="5.2" rx="2.4" fill="#030303"/><rect x="160.7" y="169.2" width="6.2" height="5.2" rx="2.4" fill="#030303"/><rect x="173.0" y="169.2" width="4.6" height="5.2" fill="#030303"/><rect x="59.0" y="151.8" width="140.3" height="17.4" fill="#171717"/><rect x="77.0" y="151.8" width="1" height="17.4" fill="#0c0c0c"/><rect x="171.6" y="155.3" width="23" height="10.2" rx="2.6" fill="none" stroke="#0e0e0e" stroke-width="0.9"/><rect x="190.8" y="144.5" width="3.6" height="3" rx="0.6" fill="none" stroke="#0a0a0a" stroke-width="0.7"/><path d="M191.6 144.5 v-1 a1 1 0 0 1 2 0 v1" fill="none" stroke="#0a0a0a" stroke-width="0.6"/><rect x="192.1" y="171.9" width="1.2" height="3.8" fill="#020202"/><rect x="192.1" y="176.5" width="1.2" height="1.2" fill="#020202"/><rect x="38.2" y="183.5" width="159.7" height="40.6" fill="#050505"/><rect x="55.2" y="190.1" width="122.4" height="28" fill="#050505"/><rect x="55.2" y="190.1" width="5.8" height="5.2" fill="#030303"/><rect x="77.5" y="190.1" width="6" height="5.2" fill="#030303"/><rect x="94.2" y="190.1" width="6.2" height="5.2" rx="2.4" fill="#030303"/><rect x="107.5" y="190.1" width="6.2" height="5.2" rx="2.4" fill="#030303"/><rect x="120.8" y="190.1" width="6.2" height="5.2" rx="2.4" fill="#030303"/><rect x="134.1" y="190.1" width="6.2" height="5.2" rx="2.4" fill="#030303"/><rect x="147.4" y="190.1" width="6.2" height="5.2" rx="2.4" fill="#030303"/><rect x="160.7" y="190.1" width="6.2" height="5.2" rx="2.4" fill="#030303"/><rect x="173.0" y="190.1" width="4.6" height="5.2" fill="#030303"/><rect x="55.2" y="212.8" width="5.8" height="5.2" fill="#030303"/><rect x="77.5" y="212.8" width="6" height="5.2" fill="#030303"/><rect x="94.2" y="212.8" width="6.2" height="5.2" rx="2.4" fill="#030303"/><rect x="107.5" y="212.8" width="6.2" height="5.2" rx="2.4" fill="#030303"/><rect x="120.8" y="212.8" width="6.2" height="5.2" rx="2.4" fill="#030303"/><rect x="134.1" y="212.8" width="6.2" height="5.2" rx="2.4" fill="#030303"/><rect x="147.4" y="212.8" width="6.2" height="5.2" rx="2.4" fill="#030303"/><rect x="160.7" y="212.8" width="6.2" height="5.2" rx="2.4" fill="#030303"/><rect x="173.0" y="212.8" width="4.6" height="5.2" fill="#030303"/><rect x="59.0" y="195.4" width="140.3" height="17.4" fill="#171717"/><rect x="77.0" y="195.4" width="1" height="17.4" fill="#0c0c0c"/><rect x="171.6" y="198.9" width="23" height="10.2" rx="2.6" fill="none" stroke="#0e0e0e" stroke-width="0.9"/><rect x="190.8" y="188.1" width="3.6" height="3" rx="0.6" fill="none" stroke="#0a0a0a" stroke-width="0.7"/><path d="M191.6 188.1 v-1 a1 1 0 0 1 2 0 v1" fill="none" stroke="#0a0a0a" stroke-width="0.6"/><rect x="192.1" y="215.5" width="1.2" height="3.8" fill="#020202"/><rect x="192.1" y="220.1" width="1.2" height="1.2" fill="#020202"/><rect x="38.2" y="227.0" width="159.7" height="40.6" fill="#050505"/><rect x="55.2" y="233.6" width="122.4" height="28" fill="#050505"/><rect x="55.2" y="233.6" width="5.8" height="5.2" fill="#030303"/><rect x="77.5" y="233.6" width="6" height="5.2" fill="#030303"/><rect x="94.2" y="233.6" width="6.2" height="5.2" rx="2.4" fill="#030303"/><rect x="107.5" y="233.6" width="6.2" height="5.2" rx="2.4" fill="#030303"/><rect x="120.8" y="233.6" width="6.2" height="5.2" rx="2.4" fill="#030303"/><rect x="134.1" y="233.6" width="6.2" height="5.2" rx="2.4" fill="#030303"/><rect x="147.4" y="233.6" width="6.2" height="5.2" rx="2.4" fill="#030303"/><rect x="160.7" y="233.6" width="6.2" height="5.2" rx="2.4" fill="#030303"/><rect x="173.0" y="233.6" width="4.6" height="5.2" fill="#030303"/><rect x="55.2" y="256.3" width="5.8" height="5.2" fill="#030303"/><rect x="77.5" y="256.3" width="6" height="5.2" fill="#030303"/><rect x="94.2" y="256.3" width="6.2" height="5.2" rx="2.4" fill="#030303"/><rect x="107.5" y="256.3" width="6.2" height="5.2" rx="2.4" fill="#030303"/><rect x="120.8" y="256.3" width="6.2" height="5.2" rx="2.4" fill="#030303"/><rect x="134.1" y="256.3" width="6.2" height="5.2" rx="2.4" fill="#030303"/><rect x="147.4" y="256.3" width="6.2" height="5.2" rx="2.4" fill="#030303"/><rect x="160.7" y="256.3" width="6.2" height="5.2" rx="2.4" fill="#030303"/><rect x="173.0" y="256.3" width="4.6" height="5.2" fill="#030303"/><rect x="59.0" y="238.9" width="140.3" height="17.4" fill="#171717"/><rect x="77.0" y="238.9" width="1" height="17.4" fill="#0c0c0c"/><rect x="171.6" y="242.4" width="23" height="10.2" rx="2.6" fill="none" stroke="#0e0e0e" stroke-width="0.9"/><rect x="190.8" y="231.6" width="3.6" height="3" rx="0.6" fill="none" stroke="#0a0a0a" stroke-width="0.7"/><path d="M191.6 231.6 v-1 a1 1 0 0 1 2 0 v1" fill="none" stroke="#0a0a0a" stroke-width="0.6"/><rect x="192.1" y="259.0" width="1.2" height="3.8" fill="#020202"/><rect x="192.1" y="263.6" width="1.2" height="1.2" fill="#020202"/><rect x="204.5" y="5.0" width="159.7" height="40.6" fill="#0c0c0c"/><rect x="221.5" y="11.6" width="122.4" height="28" fill="#080808"/><rect x="221.5" y="11.6" width="5.8" height="5.2" fill="#050505"/><rect x="243.8" y="11.6" width="6" height="5.2" fill="#050505"/><rect x="260.5" y="11.6" width="6.2" height="5.2" rx="2.4" fill="#050505"/><rect x="273.8" y="11.6" width="6.2" height="5.2" rx="2.4" fill="#050505"/><rect x="287.1" y="11.6" width="6.2" height="5.2" rx="2.4" fill="#050505"/><rect x="300.4" y="11.6" width="6.2" height="5.2" rx="2.4" fill="#050505"/><rect x="313.7" y="11.6" width="6.2" height="5.2" rx="2.4" fill="#050505"/><rect x="327.0" y="11.6" width="6.2" height="5.2" rx="2.4" fill="#050505"/><rect x="339.3" y="11.6" width="4.6" height="5.2" fill="#050505"/><rect x="221.5" y="34.3" width="5.8" height="5.2" fill="#050505"/><rect x="243.8" y="34.3" width="6" height="5.2" fill="#050505"/><rect x="260.5" y="34.3" width="6.2" height="5.2" rx="2.4" fill="#050505"/><rect x="273.8" y="34.3" width="6.2" height="5.2" rx="2.4" fill="#050505"/><rect x="287.1" y="34.3" width="6.2" height="5.2" rx="2.4" fill="#050505"/><rect x="300.4" y="34.3" width="6.2" height="5.2" rx="2.4" fill="#050505"/><rect x="313.7" y="34.3" width="6.2" height="5.2" rx="2.4" fill="#050505"/><rect x="327.0" y="34.3" width="6.2" height="5.2" rx="2.4" fill="#050505"/><rect x="339.3" y="34.3" width="4.6" height="5.2" fill="#050505"/><rect x="225.3" y="16.9" width="140.3" height="17.4" fill="#5aa83c"/><rect x="243.3" y="16.9" width="1" height="17.4" fill="#3f7f2a"/><rect x="337.9" y="20.4" width="23" height="10.2" rx="2.6" fill="none" stroke="#3f7f2a" stroke-width="0.9"/><rect x="357.1" y="9.6" width="3.6" height="3" rx="0.6" fill="none" stroke="#1a1a1a" stroke-width="0.7"/><path d="M357.9 9.6 v-1 a1 1 0 0 1 2 0 v1" fill="none" stroke="#1a1a1a" stroke-width="0.6"/><rect x="358.4" y="37.0" width="1.2" height="3.8" fill="#030303"/><rect x="358.4" y="41.6" width="1.2" height="1.2" fill="#030303"/><rect x="204.5" y="48.4" width="159.7" height="40.6" fill="#050505"/><rect x="221.5" y="55.0" width="122.4" height="28" fill="#050505"/><rect x="221.5" y="55.0" width="5.8" height="5.2" fill="#030303"/><rect x="243.8" y="55.0" width="6" height="5.2" fill="#030303"/><rect x="260.5" y="55.0" width="6.2" height="5.2" rx="2.4" fill="#030303"/><rect x="273.8" y="55.0" width="6.2" height="5.2" rx="2.4" fill="#030303"/><rect x="287.1" y="55.0" width="6.2" height="5.2" rx="2.4" fill="#030303"/><rect x="300.4" y="55.0" width="6.2" height="5.2" rx="2.4" fill="#030303"/><rect x="313.7" y="55.0" width="6.2" height="5.2" rx="2.4" fill="#030303"/><rect x="327.0" y="55.0" width="6.2" height="5.2" rx="2.4" fill="#030303"/><rect x="339.3" y="55.0" width="4.6" height="5.2" fill="#030303"/><rect x="221.5" y="77.7" width="5.8" height="5.2" fill="#030303"/><rect x="243.8" y="77.7" width="6" height="5.2" fill="#030303"/><rect x="260.5" y="77.7" width="6.2" height="5.2" rx="2.4" fill="#030303"/><rect x="273.8" y="77.7" width="6.2" height="5.2" rx="2.4" fill="#030303"/><rect x="287.1" y="77.7" width="6.2" height="5.2" rx="2.4" fill="#030303"/><rect x="300.4" y="77.7" width="6.2" height="5.2" rx="2.4" fill="#030303"/><rect x="313.7" y="77.7" width="6.2" height="5.2" rx="2.4" fill="#030303"/><rect x="327.0" y="77.7" width="6.2" height="5.2" rx="2.4" fill="#030303"/><rect x="339.3" y="77.7" width="4.6" height="5.2" fill="#030303"/><rect x="225.3" y="60.3" width="140.3" height="17.4" fill="#171717"/><rect x="243.3" y="60.3" width="1" height="17.4" fill="#0c0c0c"/><rect x="337.9" y="63.8" width="23" height="10.2" rx="2.6" fill="none" stroke="#0e0e0e" stroke-width="0.9"/><rect x="357.1" y="53.0" width="3.6" height="3" rx="0.6" fill="none" stroke="#0a0a0a" stroke-width="0.7"/><path d="M357.9 53.0 v-1 a1 1 0 0 1 2 0 v1" fill="none" stroke="#0a0a0a" stroke-width="0.6"/><rect x="358.4" y="80.4" width="1.2" height="3.8" fill="#020202"/><rect x="358.4" y="85.0" width="1.2" height="1.2" fill="#020202"/><rect x="204.5" y="91.8" width="159.7" height="40.6" fill="#050505"/><rect x="221.5" y="98.4" width="122.4" height="28" fill="#050505"/><rect x="221.5" y="98.4" width="5.8" height="5.2" fill="#030303"/><rect x="243.8" y="98.4" width="6" height="5.2" fill="#030303"/><rect x="260.5" y="98.4" width="6.2" height="5.2" rx="2.4" fill="#030303"/><rect x="273.8" y="98.4" width="6.2" height="5.2" rx="2.4" fill="#030303"/><rect x="287.1" y="98.4" width="6.2" height="5.2" rx="2.4" fill="#030303"/><rect x="300.4" y="98.4" width="6.2" height="5.2" rx="2.4" fill="#030303"/><rect x="313.7" y="98.4" width="6.2" height="5.2" rx="2.4" fill="#030303"/><rect x="327.0" y="98.4" width="6.2" height="5.2" rx="2.4" fill="#030303"/><rect x="339.3" y="98.4" width="4.6" height="5.2" fill="#030303"/><rect x="221.5" y="121.1" width="5.8" height="5.2" fill="#030303"/><rect x="243.8" y="121.1" width="6" height="5.2" fill="#030303"/><rect x="260.5" y="121.1" width="6.2" height="5.2" rx="2.4" fill="#030303"/><rect x="273.8" y="121.1" width="6.2" height="5.2" rx="2.4" fill="#030303"/><rect x="287.1" y="121.1" width="6.2" height="5.2" rx="2.4" fill="#030303"/><rect x="300.4" y="121.1" width="6.2" height="5.2" rx="2.4" fill="#030303"/><rect x="313.7" y="121.1" width="6.2" height="5.2" rx="2.4" fill="#030303"/><rect x="327.0" y="121.1" width="6.2" height="5.2" rx="2.4" fill="#030303"/><rect x="339.3" y="121.1" width="4.6" height="5.2" fill="#030303"/><rect x="225.3" y="103.7" width="140.3" height="17.4" fill="#171717"/><rect x="243.3" y="103.7" width="1" height="17.4" fill="#0c0c0c"/><rect x="337.9" y="107.2" width="23" height="10.2" rx="2.6" fill="none" stroke="#0e0e0e" stroke-width="0.9"/><rect x="357.1" y="96.4" width="3.6" height="3" rx="0.6" fill="none" stroke="#0a0a0a" stroke-width="0.7"/><path d="M357.9 96.4 v-1 a1 1 0 0 1 2 0 v1" fill="none" stroke="#0a0a0a" stroke-width="0.6"/><rect x="358.4" y="123.8" width="1.2" height="3.8" fill="#020202"/><rect x="358.4" y="128.4" width="1.2" height="1.2" fill="#020202"/><rect x="204.5" y="139.9" width="159.7" height="40.6" fill="#050505"/><rect x="221.5" y="146.5" width="122.4" height="28" fill="#050505"/><rect x="221.5" y="146.5" width="5.8" height="5.2" fill="#030303"/><rect x="243.8" y="146.5" width="6" height="5.2" fill="#030303"/><rect x="260.5" y="146.5" width="6.2" height="5.2" rx="2.4" fill="#030303"/><rect x="273.8" y="146.5" width="6.2" height="5.2" rx="2.4" fill="#030303"/><rect x="287.1" y="146.5" width="6.2" height="5.2" rx="2.4" fill="#030303"/><rect x="300.4" y="146.5" width="6.2" height="5.2" rx="2.4" fill="#030303"/><rect x="313.7" y="146.5" width="6.2" height="5.2" rx="2.4" fill="#030303"/><rect x="327.0" y="146.5" width="6.2" height="5.2" rx="2.4" fill="#030303"/><rect x="339.3" y="146.5" width="4.6" height="5.2" fill="#030303"/><rect x="221.5" y="169.2" width="5.8" height="5.2" fill="#030303"/><rect x="243.8" y="169.2" width="6" height="5.2" fill="#030303"/><rect x="260.5" y="169.2" width="6.2" height="5.2" rx="2.4" fill="#030303"/><rect x="273.8" y="169.2" width="6.2" height="5.2" rx="2.4" fill="#030303"/><rect x="287.1" y="169.2" width="6.2" height="5.2" rx="2.4" fill="#030303"/><rect x="300.4" y="169.2" width="6.2" height="5.2" rx="2.4" fill="#030303"/><rect x="313.7" y="169.2" width="6.2" height="5.2" rx="2.4" fill="#030303"/><rect x="327.0" y="169.2" width="6.2" height="5.2" rx="2.4" fill="#030303"/><rect x="339.3" y="169.2" width="4.6" height="5.2" fill="#030303"/><rect x="225.3" y="151.8" width="140.3" height="17.4" fill="#171717"/><rect x="243.3" y="151.8" width="1" height="17.4" fill="#0c0c0c"/><rect x="337.9" y="155.3" width="23" height="10.2" rx="2.6" fill="none" stroke="#0e0e0e" stroke-width="0.9"/><rect x="357.1" y="144.5" width="3.6" height="3" rx="0.6" fill="none" stroke="#0a0a0a" stroke-width="0.7"/><path d="M357.9 144.5 v-1 a1 1 0 0 1 2 0 v1" fill="none" stroke="#0a0a0a" stroke-width="0.6"/><rect x="358.4" y="171.9" width="1.2" height="3.8" fill="#020202"/><rect x="358.4" y="176.5" width="1.2" height="1.2" fill="#020202"/><rect x="204.5" y="183.5" width="159.7" height="40.6" fill="#050505"/><rect x="221.5" y="190.1" width="122.4" height="28" fill="#050505"/><rect x="221.5" y="190.1" width="5.8" height="5.2" fill="#030303"/><rect x="243.8" y="190.1" width="6" height="5.2" fill="#030303"/><rect x="260.5" y="190.1" width="6.2" height="5.2" rx="2.4" fill="#030303"/><rect x="273.8" y="190.1" width="6.2" height="5.2" rx="2.4" fill="#030303"/><rect x="287.1" y="190.1" width="6.2" height="5.2" rx="2.4" fill="#030303"/><rect x="300.4" y="190.1" width="6.2" height="5.2" rx="2.4" fill="#030303"/><rect x="313.7" y="190.1" width="6.2" height="5.2" rx="2.4" fill="#030303"/><rect x="327.0" y="190.1" width="6.2" height="5.2" rx="2.4" fill="#030303"/><rect x="339.3" y="190.1" width="4.6" height="5.2" fill="#030303"/><rect x="221.5" y="212.8" width="5.8" height="5.2" fill="#030303"/><rect x="243.8" y="212.8" width="6" height="5.2" fill="#030303"/><rect x="260.5" y="212.8" width="6.2" height="5.2" rx="2.4" fill="#030303"/><rect x="273.8" y="212.8" width="6.2" height="5.2" rx="2.4" fill="#030303"/><rect x="287.1" y="212.8" width="6.2" height="5.2" rx="2.4" fill="#030303"/><rect x="300.4" y="212.8" width="6.2" height="5.2" rx="2.4" fill="#030303"/><rect x="313.7" y="212.8" width="6.2" height="5.2" rx="2.4" fill="#030303"/><rect x="327.0" y="212.8" width="6.2" height="5.2" rx="2.4" fill="#030303"/><rect x="339.3" y="212.8" width="4.6" height="5.2" fill="#030303"/><rect x="225.3" y="195.4" width="140.3" height="17.4" fill="#171717"/><rect x="243.3" y="195.4" width="1" height="17.4" fill="#0c0c0c"/><rect x="337.9" y="198.9" width="23" height="10.2" rx="2.6" fill="none" stroke="#0e0e0e" stroke-width="0.9"/><rect x="357.1" y="188.1" width="3.6" height="3" rx="0.6" fill="none" stroke="#0a0a0a" stroke-width="0.7"/><path d="M357.9 188.1 v-1 a1 1 0 0 1 2 0 v1" fill="none" stroke="#0a0a0a" stroke-width="0.6"/><rect x="358.4" y="215.5" width="1.2" height="3.8" fill="#020202"/><rect x="358.4" y="220.1" width="1.2" height="1.2" fill="#020202"/><rect x="204.5" y="227.0" width="159.7" height="40.6" fill="#050505"/><rect x="221.5" y="233.6" width="122.4" height="28" fill="#050505"/><rect x="221.5" y="233.6" width="5.8" height="5.2" fill="#030303"/><rect x="243.8" y="233.6" width="6" height="5.2" fill="#030303"/><rect x="260.5" y="233.6" width="6.2" height="5.2" rx="2.4" fill="#030303"/><rect x="273.8" y="233.6" width="6.2" height="5.2" rx="2.4" fill="#030303"/><rect x="287.1" y="233.6" width="6.2" height="5.2" rx="2.4" fill="#030303"/><rect x="300.4" y="233.6" width="6.2" height="5.2" rx="2.4" fill="#030303"/><rect x="313.7" y="233.6" width="6.2" height="5.2" rx="2.4" fill="#030303"/><rect x="327.0" y="233.6" width="6.2" height="5.2" rx="2.4" fill="#030303"/><rect x="339.3" y="233.6" width="4.6" height="5.2" fill="#030303"/><rect x="221.5" y="256.3" width="5.8" height="5.2" fill="#030303"/><rect x="243.8" y="256.3" width="6" height="5.2" fill="#030303"/><rect x="260.5" y="256.3" width="6.2" height="5.2" rx="2.4" fill="#030303"/><rect x="273.8" y="256.3" width="6.2" height="5.2" rx="2.4" fill="#030303"/><rect x="287.1" y="256.3" width="6.2" height="5.2" rx="2.4" fill="#030303"/><rect x="300.4" y="256.3" width="6.2" height="5.2" rx="2.4" fill="#030303"/><rect x="313.7" y="256.3" width="6.2" height="5.2" rx="2.4" fill="#030303"/><rect x="327.0" y="256.3" width="6.2" height="5.2" rx="2.4" fill="#030303"/><rect x="339.3" y="256.3" width="4.6" height="5.2" fill="#030303"/><rect x="225.3" y="238.9" width="140.3" height="17.4" fill="#171717"/><rect x="243.3" y="238.9" width="1" height="17.4" fill="#0c0c0c"/><rect x="337.9" y="242.4" width="23" height="10.2" rx="2.6" fill="none" stroke="#0e0e0e" stroke-width="0.9"/><rect x="357.1" y="231.6" width="3.6" height="3" rx="0.6" fill="none" stroke="#0a0a0a" stroke-width="0.7"/><path d="M357.9 231.6 v-1 a1 1 0 0 1 2 0 v1" fill="none" stroke="#0a0a0a" stroke-width="0.6"/><rect x="358.4" y="259.0" width="1.2" height="3.8" fill="#020202"/><rect x="358.4" y="263.6" width="1.2" height="1.2" fill="#020202"/><rect x="370.8" y="5.0" width="159.7" height="40.6" fill="#050505"/><rect x="387.8" y="11.6" width="122.4" height="28" fill="#050505"/><rect x="387.8" y="11.6" width="5.8" height="5.2" fill="#030303"/><rect x="410.1" y="11.6" width="6" height="5.2" fill="#030303"/><rect x="426.8" y="11.6" width="6.2" height="5.2" rx="2.4" fill="#030303"/><rect x="440.1" y="11.6" width="6.2" height="5.2" rx="2.4" fill="#030303"/><rect x="453.4" y="11.6" width="6.2" height="5.2" rx="2.4" fill="#030303"/><rect x="466.7" y="11.6" width="6.2" height="5.2" rx="2.4" fill="#030303"/><rect x="480.0" y="11.6" width="6.2" height="5.2" rx="2.4" fill="#030303"/><rect x="493.3" y="11.6" width="6.2" height="5.2" rx="2.4" fill="#030303"/><rect x="505.6" y="11.6" width="4.6" height="5.2" fill="#030303"/><rect x="387.8" y="34.3" width="5.8" height="5.2" fill="#030303"/><rect x="410.1" y="34.3" width="6" height="5.2" fill="#030303"/><rect x="426.8" y="34.3" width="6.2" height="5.2" rx="2.4" fill="#030303"/><rect x="440.1" y="34.3" width="6.2" height="5.2" rx="2.4" fill="#030303"/><rect x="453.4" y="34.3" width="6.2" height="5.2" rx="2.4" fill="#030303"/><rect x="466.7" y="34.3" width="6.2" height="5.2" rx="2.4" fill="#030303"/><rect x="480.0" y="34.3" width="6.2" height="5.2" rx="2.4" fill="#030303"/><rect x="493.3" y="34.3" width="6.2" height="5.2" rx="2.4" fill="#030303"/><rect x="505.6" y="34.3" width="4.6" height="5.2" fill="#030303"/><rect x="391.6" y="16.9" width="140.3" height="17.4" fill="#171717"/><rect x="409.6" y="16.9" width="1" height="17.4" fill="#0c0c0c"/><rect x="504.2" y="20.4" width="23" height="10.2" rx="2.6" fill="none" stroke="#0e0e0e" stroke-width="0.9"/><rect x="523.4" y="9.6" width="3.6" height="3" rx="0.6" fill="none" stroke="#0a0a0a" stroke-width="0.7"/><path d="M524.2 9.6 v-1 a1 1 0 0 1 2 0 v1" fill="none" stroke="#0a0a0a" stroke-width="0.6"/><rect x="524.7" y="37.0" width="1.2" height="3.8" fill="#020202"/><rect x="524.7" y="41.6" width="1.2" height="1.2" fill="#020202"/><rect x="370.8" y="48.4" width="159.7" height="40.6" fill="#050505"/><rect x="387.8" y="55.0" width="122.4" height="28" fill="#050505"/><rect x="387.8" y="55.0" width="5.8" height="5.2" fill="#030303"/><rect x="410.1" y="55.0" width="6" height="5.2" fill="#030303"/><rect x="426.8" y="55.0" width="6.2" height="5.2" rx="2.4" fill="#030303"/><rect x="440.1" y="55.0" width="6.2" height="5.2" rx="2.4" fill="#030303"/><rect x="453.4" y="55.0" width="6.2" height="5.2" rx="2.4" fill="#030303"/><rect x="466.7" y="55.0" width="6.2" height="5.2" rx="2.4" fill="#030303"/><rect x="480.0" y="55.0" width="6.2" height="5.2" rx="2.4" fill="#030303"/><rect x="493.3" y="55.0" width="6.2" height="5.2" rx="2.4" fill="#030303"/><rect x="505.6" y="55.0" width="4.6" height="5.2" fill="#030303"/><rect x="387.8" y="77.7" width="5.8" height="5.2" fill="#030303"/><rect x="410.1" y="77.7" width="6" height="5.2" fill="#030303"/><rect x="426.8" y="77.7" width="6.2" height="5.2" rx="2.4" fill="#030303"/><rect x="440.1" y="77.7" width="6.2" height="5.2" rx="2.4" fill="#030303"/><rect x="453.4" y="77.7" width="6.2" height="5.2" rx="2.4" fill="#030303"/><rect x="466.7" y="77.7" width="6.2" height="5.2" rx="2.4" fill="#030303"/><rect x="480.0" y="77.7" width="6.2" height="5.2" rx="2.4" fill="#030303"/><rect x="493.3" y="77.7" width="6.2" height="5.2" rx="2.4" fill="#030303"/><rect x="505.6" y="77.7" width="4.6" height="5.2" fill="#030303"/><rect x="391.6" y="60.3" width="140.3" height="17.4" fill="#171717"/><rect x="409.6" y="60.3" width="1" height="17.4" fill="#0c0c0c"/><rect x="504.2" y="63.8" width="23" height="10.2" rx="2.6" fill="none" stroke="#0e0e0e" stroke-width="0.9"/><rect x="523.4" y="53.0" width="3.6" height="3" rx="0.6" fill="none" stroke="#0a0a0a" stroke-width="0.7"/><path d="M524.2 53.0 v-1 a1 1 0 0 1 2 0 v1" fill="none" stroke="#0a0a0a" stroke-width="0.6"/><rect x="524.7" y="80.4" width="1.2" height="3.8" fill="#020202"/><rect x="524.7" y="85.0" width="1.2" height="1.2" fill="#020202"/><rect x="370.8" y="91.8" width="159.7" height="40.6" fill="#050505"/><rect x="387.8" y="98.4" width="122.4" height="28" fill="#050505"/><rect x="387.8" y="98.4" width="5.8" height="5.2" fill="#030303"/><rect x="410.1" y="98.4" width="6" height="5.2" fill="#030303"/><rect x="426.8" y="98.4" width="6.2" height="5.2" rx="2.4" fill="#030303"/><rect x="440.1" y="98.4" width="6.2" height="5.2" rx="2.4" fill="#030303"/><rect x="453.4" y="98.4" width="6.2" height="5.2" rx="2.4" fill="#030303"/><rect x="466.7" y="98.4" width="6.2" height="5.2" rx="2.4" fill="#030303"/><rect x="480.0" y="98.4" width="6.2" height="5.2" rx="2.4" fill="#030303"/><rect x="493.3" y="98.4" width="6.2" height="5.2" rx="2.4" fill="#030303"/><rect x="505.6" y="98.4" width="4.6" height="5.2" fill="#030303"/><rect x="387.8" y="121.1" width="5.8" height="5.2" fill="#030303"/><rect x="410.1" y="121.1" width="6" height="5.2" fill="#030303"/><rect x="426.8" y="121.1" width="6.2" height="5.2" rx="2.4" fill="#030303"/><rect x="440.1" y="121.1" width="6.2" height="5.2" rx="2.4" fill="#030303"/><rect x="453.4" y="121.1" width="6.2" height="5.2" rx="2.4" fill="#030303"/><rect x="466.7" y="121.1" width="6.2" height="5.2" rx="2.4" fill="#030303"/><rect x="480.0" y="121.1" width="6.2" height="5.2" rx="2.4" fill="#030303"/><rect x="493.3" y="121.1" width="6.2" height="5.2" rx="2.4" fill="#030303"/><rect x="505.6" y="121.1" width="4.6" height="5.2" fill="#030303"/><rect x="391.6" y="103.7" width="140.3" height="17.4" fill="#171717"/><rect x="409.6" y="103.7" width="1" height="17.4" fill="#0c0c0c"/><rect x="504.2" y="107.2" width="23" height="10.2" rx="2.6" fill="none" stroke="#0e0e0e" stroke-width="0.9"/><rect x="523.4" y="96.4" width="3.6" height="3" rx="0.6" fill="none" stroke="#0a0a0a" stroke-width="0.7"/><path d="M524.2 96.4 v-1 a1 1 0 0 1 2 0 v1" fill="none" stroke="#0a0a0a" stroke-width="0.6"/><rect x="524.7" y="123.8" width="1.2" height="3.8" fill="#020202"/><rect x="524.7" y="128.4" width="1.2" height="1.2" fill="#020202"/><rect x="370.8" y="139.9" width="159.7" height="40.6" fill="#050505"/><rect x="387.8" y="146.5" width="122.4" height="28" fill="#050505"/><rect x="387.8" y="146.5" width="5.8" height="5.2" fill="#030303"/><rect x="410.1" y="146.5" width="6" height="5.2" fill="#030303"/><rect x="426.8" y="146.5" width="6.2" height="5.2" rx="2.4" fill="#030303"/><rect x="440.1" y="146.5" width="6.2" height="5.2" rx="2.4" fill="#030303"/><rect x="453.4" y="146.5" width="6.2" height="5.2" rx="2.4" fill="#030303"/><rect x="466.7" y="146.5" width="6.2" height="5.2" rx="2.4" fill="#030303"/><rect x="480.0" y="146.5" width="6.2" height="5.2" rx="2.4" fill="#030303"/><rect x="493.3" y="146.5" width="6.2" height="5.2" rx="2.4" fill="#030303"/><rect x="505.6" y="146.5" width="4.6" height="5.2" fill="#030303"/><rect x="387.8" y="169.2" width="5.8" height="5.2" fill="#030303"/><rect x="410.1" y="169.2" width="6" height="5.2" fill="#030303"/><rect x="426.8" y="169.2" width="6.2" height="5.2" rx="2.4" fill="#030303"/><rect x="440.1" y="169.2" width="6.2" height="5.2" rx="2.4" fill="#030303"/><rect x="453.4" y="169.2" width="6.2" height="5.2" rx="2.4" fill="#030303"/><rect x="466.7" y="169.2" width="6.2" height="5.2" rx="2.4" fill="#030303"/><rect x="480.0" y="169.2" width="6.2" height="5.2" rx="2.4" fill="#030303"/><rect x="493.3" y="169.2" width="6.2" height="5.2" rx="2.4" fill="#030303"/><rect x="505.6" y="169.2" width="4.6" height="5.2" fill="#030303"/><rect x="391.6" y="151.8" width="140.3" height="17.4" fill="#171717"/><rect x="409.6" y="151.8" width="1" height="17.4" fill="#0c0c0c"/><rect x="504.2" y="155.3" width="23" height="10.2" rx="2.6" fill="none" stroke="#0e0e0e" stroke-width="0.9"/><rect x="523.4" y="144.5" width="3.6" height="3" rx="0.6" fill="none" stroke="#0a0a0a" stroke-width="0.7"/><path d="M524.2 144.5 v-1 a1 1 0 0 1 2 0 v1" fill="none" stroke="#0a0a0a" stroke-width="0.6"/><rect x="524.7" y="171.9" width="1.2" height="3.8" fill="#020202"/><rect x="524.7" y="176.5" width="1.2" height="1.2" fill="#020202"/><rect x="370.8" y="183.5" width="159.7" height="40.6" fill="#050505"/><rect x="387.8" y="190.1" width="122.4" height="28" fill="#050505"/><rect x="387.8" y="190.1" width="5.8" height="5.2" fill="#030303"/><rect x="410.1" y="190.1" width="6" height="5.2" fill="#030303"/><rect x="426.8" y="190.1" width="6.2" height="5.2" rx="2.4" fill="#030303"/><rect x="440.1" y="190.1" width="6.2" height="5.2" rx="2.4" fill="#030303"/><rect x="453.4" y="190.1" width="6.2" height="5.2" rx="2.4" fill="#030303"/><rect x="466.7" y="190.1" width="6.2" height="5.2" rx="2.4" fill="#030303"/><rect x="480.0" y="190.1" width="6.2" height="5.2" rx="2.4" fill="#030303"/><rect x="493.3" y="190.1" width="6.2" height="5.2" rx="2.4" fill="#030303"/><rect x="505.6" y="190.1" width="4.6" height="5.2" fill="#030303"/><rect x="387.8" y="212.8" width="5.8" height="5.2" fill="#030303"/><rect x="410.1" y="212.8" width="6" height="5.2" fill="#030303"/><rect x="426.8" y="212.8" width="6.2" height="5.2" rx="2.4" fill="#030303"/><rect x="440.1" y="212.8" width="6.2" height="5.2" rx="2.4" fill="#030303"/><rect x="453.4" y="212.8" width="6.2" height="5.2" rx="2.4" fill="#030303"/><rect x="466.7" y="212.8" width="6.2" height="5.2" rx="2.4" fill="#030303"/><rect x="480.0" y="212.8" width="6.2" height="5.2" rx="2.4" fill="#030303"/><rect x="493.3" y="212.8" width="6.2" height="5.2" rx="2.4" fill="#030303"/><rect x="505.6" y="212.8" width="4.6" height="5.2" fill="#030303"/><rect x="391.6" y="195.4" width="140.3" height="17.4" fill="#171717"/><rect x="409.6" y="195.4" width="1" height="17.4" fill="#0c0c0c"/><rect x="504.2" y="198.9" width="23" height="10.2" rx="2.6" fill="none" stroke="#0e0e0e" stroke-width="0.9"/><rect x="523.4" y="188.1" width="3.6" height="3" rx="0.6" fill="none" stroke="#0a0a0a" stroke-width="0.7"/><path d="M524.2 188.1 v-1 a1 1 0 0 1 2 0 v1" fill="none" stroke="#0a0a0a" stroke-width="0.6"/><rect x="524.7" y="215.5" width="1.2" height="3.8" fill="#020202"/><rect x="524.7" y="220.1" width="1.2" height="1.2" fill="#020202"/><rect x="370.8" y="227.0" width="159.7" height="40.6" fill="#050505"/><rect x="387.8" y="233.6" width="122.4" height="28" fill="#050505"/><rect x="387.8" y="233.6" width="5.8" height="5.2" fill="#030303"/><rect x="410.1" y="233.6" width="6" height="5.2" fill="#030303"/><rect x="426.8" y="233.6" width="6.2" height="5.2" rx="2.4" fill="#030303"/><rect x="440.1" y="233.6" width="6.2" height="5.2" rx="2.4" fill="#030303"/><rect x="453.4" y="233.6" width="6.2" height="5.2" rx="2.4" fill="#030303"/><rect x="466.7" y="233.6" width="6.2" height="5.2" rx="2.4" fill="#030303"/><rect x="480.0" y="233.6" width="6.2" height="5.2" rx="2.4" fill="#030303"/><rect x="493.3" y="233.6" width="6.2" height="5.2" rx="2.4" fill="#030303"/><rect x="505.6" y="233.6" width="4.6" height="5.2" fill="#030303"/><rect x="387.8" y="256.3" width="5.8" height="5.2" fill="#030303"/><rect x="410.1" y="256.3" width="6" height="5.2" fill="#030303"/><rect x="426.8" y="256.3" width="6.2" height="5.2" rx="2.4" fill="#030303"/><rect x="440.1" y="256.3" width="6.2" height="5.2" rx="2.4" fill="#030303"/><rect x="453.4" y="256.3" width="6.2" height="5.2" rx="2.4" fill="#030303"/><rect x="466.7" y="256.3" width="6.2" height="5.2" rx="2.4" fill="#030303"/><rect x="480.0" y="256.3" width="6.2" height="5.2" rx="2.4" fill="#030303"/><rect x="493.3" y="256.3" width="6.2" height="5.2" rx="2.4" fill="#030303"/><rect x="505.6" y="256.3" width="4.6" height="5.2" fill="#030303"/><rect x="391.6" y="238.9" width="140.3" height="17.4" fill="#171717"/><rect x="409.6" y="238.9" width="1" height="17.4" fill="#0c0c0c"/><rect x="504.2" y="242.4" width="23" height="10.2" rx="2.6" fill="none" stroke="#0e0e0e" stroke-width="0.9"/><rect x="523.4" y="231.6" width="3.6" height="3" rx="0.6" fill="none" stroke="#0a0a0a" stroke-width="0.7"/><path d="M524.2 231.6 v-1 a1 1 0 0 1 2 0 v1" fill="none" stroke="#0a0a0a" stroke-width="0.6"/><rect x="524.7" y="259.0" width="1.2" height="3.8" fill="#020202"/><rect x="524.7" y="263.6" width="1.2" height="1.2" fill="#020202"/><rect x="537.1" y="5.0" width="159.7" height="40.6" fill="#050505"/><rect x="554.1" y="11.6" width="122.4" height="28" fill="#050505"/><rect x="554.1" y="11.6" width="5.8" height="5.2" fill="#030303"/><rect x="576.4" y="11.6" width="6" height="5.2" fill="#030303"/><rect x="593.1" y="11.6" width="6.2" height="5.2" rx="2.4" fill="#030303"/><rect x="606.4" y="11.6" width="6.2" height="5.2" rx="2.4" fill="#030303"/><rect x="619.7" y="11.6" width="6.2" height="5.2" rx="2.4" fill="#030303"/><rect x="633.0" y="11.6" width="6.2" height="5.2" rx="2.4" fill="#030303"/><rect x="646.3" y="11.6" width="6.2" height="5.2" rx="2.4" fill="#030303"/><rect x="659.6" y="11.6" width="6.2" height="5.2" rx="2.4" fill="#030303"/><rect x="671.9" y="11.6" width="4.6" height="5.2" fill="#030303"/><rect x="554.1" y="34.3" width="5.8" height="5.2" fill="#030303"/><rect x="576.4" y="34.3" width="6" height="5.2" fill="#030303"/><rect x="593.1" y="34.3" width="6.2" height="5.2" rx="2.4" fill="#030303"/><rect x="606.4" y="34.3" width="6.2" height="5.2" rx="2.4" fill="#030303"/><rect x="619.7" y="34.3" width="6.2" height="5.2" rx="2.4" fill="#030303"/><rect x="633.0" y="34.3" width="6.2" height="5.2" rx="2.4" fill="#030303"/><rect x="646.3" y="34.3" width="6.2" height="5.2" rx="2.4" fill="#030303"/><rect x="659.6" y="34.3" width="6.2" height="5.2" rx="2.4" fill="#030303"/><rect x="671.9" y="34.3" width="4.6" height="5.2" fill="#030303"/><rect x="557.9" y="16.9" width="140.3" height="17.4" fill="#171717"/><rect x="575.9" y="16.9" width="1" height="17.4" fill="#0c0c0c"/><rect x="670.5" y="20.4" width="23" height="10.2" rx="2.6" fill="none" stroke="#0e0e0e" stroke-width="0.9"/><rect x="689.7" y="9.6" width="3.6" height="3" rx="0.6" fill="none" stroke="#0a0a0a" stroke-width="0.7"/><path d="M690.5 9.6 v-1 a1 1 0 0 1 2 0 v1" fill="none" stroke="#0a0a0a" stroke-width="0.6"/><rect x="691.0" y="37.0" width="1.2" height="3.8" fill="#020202"/><rect x="691.0" y="41.6" width="1.2" height="1.2" fill="#020202"/><rect x="537.1" y="48.4" width="159.7" height="40.6" fill="#050505"/><rect x="554.1" y="55.0" width="122.4" height="28" fill="#050505"/><rect x="554.1" y="55.0" width="5.8" height="5.2" fill="#030303"/><rect x="576.4" y="55.0" width="6" height="5.2" fill="#030303"/><rect x="593.1" y="55.0" width="6.2" height="5.2" rx="2.4" fill="#030303"/><rect x="606.4" y="55.0" width="6.2" height="5.2" rx="2.4" fill="#030303"/><rect x="619.7" y="55.0" width="6.2" height="5.2" rx="2.4" fill="#030303"/><rect x="633.0" y="55.0" width="6.2" height="5.2" rx="2.4" fill="#030303"/><rect x="646.3" y="55.0" width="6.2" height="5.2" rx="2.4" fill="#030303"/><rect x="659.6" y="55.0" width="6.2" height="5.2" rx="2.4" fill="#030303"/><rect x="671.9" y="55.0" width="4.6" height="5.2" fill="#030303"/><rect x="554.1" y="77.7" width="5.8" height="5.2" fill="#030303"/><rect x="576.4" y="77.7" width="6" height="5.2" fill="#030303"/><rect x="593.1" y="77.7" width="6.2" height="5.2" rx="2.4" fill="#030303"/><rect x="606.4" y="77.7" width="6.2" height="5.2" rx="2.4" fill="#030303"/><rect x="619.7" y="77.7" width="6.2" height="5.2" rx="2.4" fill="#030303"/><rect x="633.0" y="77.7" width="6.2" height="5.2" rx="2.4" fill="#030303"/><rect x="646.3" y="77.7" width="6.2" height="5.2" rx="2.4" fill="#030303"/><rect x="659.6" y="77.7" width="6.2" height="5.2" rx="2.4" fill="#030303"/><rect x="671.9" y="77.7" width="4.6" height="5.2" fill="#030303"/><rect x="557.9" y="60.3" width="140.3" height="17.4" fill="#171717"/><rect x="575.9" y="60.3" width="1" height="17.4" fill="#0c0c0c"/><rect x="670.5" y="63.8" width="23" height="10.2" rx="2.6" fill="none" stroke="#0e0e0e" stroke-width="0.9"/><rect x="689.7" y="53.0" width="3.6" height="3" rx="0.6" fill="none" stroke="#0a0a0a" stroke-width="0.7"/><path d="M690.5 53.0 v-1 a1 1 0 0 1 2 0 v1" fill="none" stroke="#0a0a0a" stroke-width="0.6"/><rect x="691.0" y="80.4" width="1.2" height="3.8" fill="#020202"/><rect x="691.0" y="85.0" width="1.2" height="1.2" fill="#020202"/><rect x="537.1" y="91.8" width="159.7" height="40.6" fill="#050505"/><rect x="554.1" y="98.4" width="122.4" height="28" fill="#050505"/><rect x="554.1" y="98.4" width="5.8" height="5.2" fill="#030303"/><rect x="576.4" y="98.4" width="6" height="5.2" fill="#030303"/><rect x="593.1" y="98.4" width="6.2" height="5.2" rx="2.4" fill="#030303"/><rect x="606.4" y="98.4" width="6.2" height="5.2" rx="2.4" fill="#030303"/><rect x="619.7" y="98.4" width="6.2" height="5.2" rx="2.4" fill="#030303"/><rect x="633.0" y="98.4" width="6.2" height="5.2" rx="2.4" fill="#030303"/><rect x="646.3" y="98.4" width="6.2" height="5.2" rx="2.4" fill="#030303"/><rect x="659.6" y="98.4" width="6.2" height="5.2" rx="2.4" fill="#030303"/><rect x="671.9" y="98.4" width="4.6" height="5.2" fill="#030303"/><rect x="554.1" y="121.1" width="5.8" height="5.2" fill="#030303"/><rect x="576.4" y="121.1" width="6" height="5.2" fill="#030303"/><rect x="593.1" y="121.1" width="6.2" height="5.2" rx="2.4" fill="#030303"/><rect x="606.4" y="121.1" width="6.2" height="5.2" rx="2.4" fill="#030303"/><rect x="619.7" y="121.1" width="6.2" height="5.2" rx="2.4" fill="#030303"/><rect x="633.0" y="121.1" width="6.2" height="5.2" rx="2.4" fill="#030303"/><rect x="646.3" y="121.1" width="6.2" height="5.2" rx="2.4" fill="#030303"/><rect x="659.6" y="121.1" width="6.2" height="5.2" rx="2.4" fill="#030303"/><rect x="671.9" y="121.1" width="4.6" height="5.2" fill="#030303"/><rect x="557.9" y="103.7" width="140.3" height="17.4" fill="#171717"/><rect x="575.9" y="103.7" width="1" height="17.4" fill="#0c0c0c"/><rect x="670.5" y="107.2" width="23" height="10.2" rx="2.6" fill="none" stroke="#0e0e0e" stroke-width="0.9"/><rect x="689.7" y="96.4" width="3.6" height="3" rx="0.6" fill="none" stroke="#0a0a0a" stroke-width="0.7"/><path d="M690.5 96.4 v-1 a1 1 0 0 1 2 0 v1" fill="none" stroke="#0a0a0a" stroke-width="0.6"/><rect x="691.0" y="123.8" width="1.2" height="3.8" fill="#020202"/><rect x="691.0" y="128.4" width="1.2" height="1.2" fill="#020202"/><rect x="537.1" y="139.9" width="159.7" height="40.6" fill="#050505"/><rect x="554.1" y="146.5" width="122.4" height="28" fill="#050505"/><rect x="554.1" y="146.5" width="5.8" height="5.2" fill="#030303"/><rect x="576.4" y="146.5" width="6" height="5.2" fill="#030303"/><rect x="593.1" y="146.5" width="6.2" height="5.2" rx="2.4" fill="#030303"/><rect x="606.4" y="146.5" width="6.2" height="5.2" rx="2.4" fill="#030303"/><rect x="619.7" y="146.5" width="6.2" height="5.2" rx="2.4" fill="#030303"/><rect x="633.0" y="146.5" width="6.2" height="5.2" rx="2.4" fill="#030303"/><rect x="646.3" y="146.5" width="6.2" height="5.2" rx="2.4" fill="#030303"/><rect x="659.6" y="146.5" width="6.2" height="5.2" rx="2.4" fill="#030303"/><rect x="671.9" y="146.5" width="4.6" height="5.2" fill="#030303"/><rect x="554.1" y="169.2" width="5.8" height="5.2" fill="#030303"/><rect x="576.4" y="169.2" width="6" height="5.2" fill="#030303"/><rect x="593.1" y="169.2" width="6.2" height="5.2" rx="2.4" fill="#030303"/><rect x="606.4" y="169.2" width="6.2" height="5.2" rx="2.4" fill="#030303"/><rect x="619.7" y="169.2" width="6.2" height="5.2" rx="2.4" fill="#030303"/><rect x="633.0" y="169.2" width="6.2" height="5.2" rx="2.4" fill="#030303"/><rect x="646.3" y="169.2" width="6.2" height="5.2" rx="2.4" fill="#030303"/><rect x="659.6" y="169.2" width="6.2" height="5.2" rx="2.4" fill="#030303"/><rect x="671.9" y="169.2" width="4.6" height="5.2" fill="#030303"/><rect x="557.9" y="151.8" width="140.3" height="17.4" fill="#171717"/><rect x="575.9" y="151.8" width="1" height="17.4" fill="#0c0c0c"/><rect x="670.5" y="155.3" width="23" height="10.2" rx="2.6" fill="none" stroke="#0e0e0e" stroke-width="0.9"/><rect x="689.7" y="144.5" width="3.6" height="3" rx="0.6" fill="none" stroke="#0a0a0a" stroke-width="0.7"/><path d="M690.5 144.5 v-1 a1 1 0 0 1 2 0 v1" fill="none" stroke="#0a0a0a" stroke-width="0.6"/><rect x="691.0" y="171.9" width="1.2" height="3.8" fill="#020202"/><rect x="691.0" y="176.5" width="1.2" height="1.2" fill="#020202"/><rect x="537.1" y="183.5" width="159.7" height="40.6" fill="#050505"/><rect x="554.1" y="190.1" width="122.4" height="28" fill="#050505"/><rect x="554.1" y="190.1" width="5.8" height="5.2" fill="#030303"/><rect x="576.4" y="190.1" width="6" height="5.2" fill="#030303"/><rect x="593.1" y="190.1" width="6.2" height="5.2" rx="2.4" fill="#030303"/><rect x="606.4" y="190.1" width="6.2" height="5.2" rx="2.4" fill="#030303"/><rect x="619.7" y="190.1" width="6.2" height="5.2" rx="2.4" fill="#030303"/><rect x="633.0" y="190.1" width="6.2" height="5.2" rx="2.4" fill="#030303"/><rect x="646.3" y="190.1" width="6.2" height="5.2" rx="2.4" fill="#030303"/><rect x="659.6" y="190.1" width="6.2" height="5.2" rx="2.4" fill="#030303"/><rect x="671.9" y="190.1" width="4.6" height="5.2" fill="#030303"/><rect x="554.1" y="212.8" width="5.8" height="5.2" fill="#030303"/><rect x="576.4" y="212.8" width="6" height="5.2" fill="#030303"/><rect x="593.1" y="212.8" width="6.2" height="5.2" rx="2.4" fill="#030303"/><rect x="606.4" y="212.8" width="6.2" height="5.2" rx="2.4" fill="#030303"/><rect x="619.7" y="212.8" width="6.2" height="5.2" rx="2.4" fill="#030303"/><rect x="633.0" y="212.8" width="6.2" height="5.2" rx="2.4" fill="#030303"/><rect x="646.3" y="212.8" width="6.2" height="5.2" rx="2.4" fill="#030303"/><rect x="659.6" y="212.8" width="6.2" height="5.2" rx="2.4" fill="#030303"/><rect x="671.9" y="212.8" width="4.6" height="5.2" fill="#030303"/><rect x="557.9" y="195.4" width="140.3" height="17.4" fill="#171717"/><rect x="575.9" y="195.4" width="1" height="17.4" fill="#0c0c0c"/><rect x="670.5" y="198.9" width="23" height="10.2" rx="2.6" fill="none" stroke="#0e0e0e" stroke-width="0.9"/><rect x="689.7" y="188.1" width="3.6" height="3" rx="0.6" fill="none" stroke="#0a0a0a" stroke-width="0.7"/><path d="M690.5 188.1 v-1 a1 1 0 0 1 2 0 v1" fill="none" stroke="#0a0a0a" stroke-width="0.6"/><rect x="691.0" y="215.5" width="1.2" height="3.8" fill="#020202"/><rect x="691.0" y="220.1" width="1.2" height="1.2" fill="#020202"/><rect x="537.1" y="227.0" width="159.7" height="40.6" fill="#050505"/><rect x="554.1" y="233.6" width="122.4" height="28" fill="#050505"/><rect x="554.1" y="233.6" width="5.8" height="5.2" fill="#030303"/><rect x="576.4" y="233.6" width="6" height="5.2" fill="#030303"/><rect x="593.1" y="233.6" width="6.2" height="5.2" rx="2.4" fill="#030303"/><rect x="606.4" y="233.6" width="6.2" height="5.2" rx="2.4" fill="#030303"/><rect x="619.7" y="233.6" width="6.2" height="5.2" rx="2.4" fill="#030303"/><rect x="633.0" y="233.6" width="6.2" height="5.2" rx="2.4" fill="#030303"/><rect x="646.3" y="233.6" width="6.2" height="5.2" rx="2.4" fill="#030303"/><rect x="659.6" y="233.6" width="6.2" height="5.2" rx="2.4" fill="#030303"/><rect x="671.9" y="233.6" width="4.6" height="5.2" fill="#030303"/><rect x="554.1" y="256.3" width="5.8" height="5.2" fill="#030303"/><rect x="576.4" y="256.3" width="6" height="5.2" fill="#030303"/><rect x="593.1" y="256.3" width="6.2" height="5.2" rx="2.4" fill="#030303"/><rect x="606.4" y="256.3" width="6.2" height="5.2" rx="2.4" fill="#030303"/><rect x="619.7" y="256.3" width="6.2" height="5.2" rx="2.4" fill="#030303"/><rect x="633.0" y="256.3" width="6.2" height="5.2" rx="2.4" fill="#030303"/><rect x="646.3" y="256.3" width="6.2" height="5.2" rx="2.4" fill="#030303"/><rect x="659.6" y="256.3" width="6.2" height="5.2" rx="2.4" fill="#030303"/><rect x="671.9" y="256.3" width="4.6" height="5.2" fill="#030303"/><rect x="557.9" y="238.9" width="140.3" height="17.4" fill="#171717"/><rect x="575.9" y="238.9" width="1" height="17.4" fill="#0c0c0c"/><rect x="670.5" y="242.4" width="23" height="10.2" rx="2.6" fill="none" stroke="#0e0e0e" stroke-width="0.9"/><rect x="689.7" y="231.6" width="3.6" height="3" rx="0.6" fill="none" stroke="#0a0a0a" stroke-width="0.7"/><path d="M690.5 231.6 v-1 a1 1 0 0 1 2 0 v1" fill="none" stroke="#0a0a0a" stroke-width="0.6"/><rect x="691.0" y="259.0" width="1.2" height="3.8" fill="#020202"/><rect x="691.0" y="263.6" width="1.2" height="1.2" fill="#020202"/><rect x="32" y="0" width="5" height="269" fill="#262626"/><rect x="0.0" y="0" width="32" height="269" fill="#303030"/><rect x="0.0" y="180" width="32" height="1.6" fill="#0c0c0c"/><rect x="0.0" y="243" width="32" height="1.6" fill="#0c0c0c"/><rect x="0.0" y="20" width="29.0" height="64" fill="#353535" opacity="0.6"/><text x="0.9" y="17.6" font-size="7.9" textLength="27.8" lengthAdjust="spacingAndGlyphs" fill="#c0c0c0">CTRL1 T</text><circle cx="8.5" cy="28.1" r="5.1" fill="#b0b0b0"/><circle cx="8.5" cy="37.8" r="2.7" fill="none" stroke="#b0b0b0" stroke-width="0.7"/><path d="M6.5 36.6 l2 1.6 l2 -1.6 M8.5 38.2 v2" fill="none" stroke="#b0b0b0" stroke-width="0.6"/><circle cx="8.5" cy="53.2" r="2.7" fill="none" stroke="#b0b0b0" stroke-width="0.7"/><path d="M6.7 54 q1.8 1.6 3.6 0" fill="none" stroke="#b0b0b0" stroke-width="0.6"/><circle cx="8.5" cy="59.5" r="2.3" fill="#0c0c0c"/><text x="4.9" y="68.8" font-size="7.6" textLength="6.7" lengthAdjust="spacingAndGlyphs" fill="#c0c0c0">ID</text><circle cx="8.5" cy="76" r="5.1" fill="#b0b0b0"/><circle cx="25.2" cy="28.1" r="1.9" fill="#c4c4c4"/><circle cx="25.2" cy="40" r="1.9" fill="#c4c4c4"/><circle cx="25.2" cy="51.8" r="1.9" fill="#c4c4c4"/><path d="M23.2 36.2 l2 -3.6 l2 3.6 z" fill="none" stroke="#6a6a6a" stroke-width="0.5"/><path d="M23.0 46 h4.4 M23.8 47.8 h2.8 M25.2 44.6 v1.4" fill="none" stroke="#6a6a6a" stroke-width="0.5"/><path d="M23.0 59 v-2.4 h4.4 v2.4 M22.8 60.6 h1.6 M26.0 60.6 h1.6" fill="none" stroke="#6a6a6a" stroke-width="0.5"/><rect x="16" y="181.6" width="16" height="61.4" fill="#000" opacity="0.12"/><rect x="19" y="99" width="9.5" height="46.5" fill="#000" opacity="0.12"/><rect x="31.4" y="99" width="5" height="46.5" fill="#fff" opacity="0.05"/><rect x="32.3" y="28" width="4.2" height="31.5" fill="#0c0c0c"/><rect x="703.6" y="0" width="2.4" height="269" fill="#0c0c0c"/><rect x="706" y="0" width="4.4" height="269" fill="#262626"/><rect x="706" y="22.7" width="4.2" height="21.8" fill="#fff" opacity="0.04"/><rect x="706" y="44.5" width="4.2" height="15.2" fill="#0c0c0c"/><g transform="translate(710.3 0)"><rect x="0.0" y="0" width="32" height="269" fill="#303030"/><rect x="0.0" y="180" width="32" height="1.6" fill="#0c0c0c"/><rect x="0.0" y="243" width="32" height="1.6" fill="#0c0c0c"/><rect x="2.1" y="20" width="29.6" height="64" fill="#353535" opacity="0.6"/><text x="3.0" y="17.6" font-size="7.9" textLength="27.8" lengthAdjust="spacingAndGlyphs" fill="#c0c0c0">CTRL2 T</text><circle cx="10.6" cy="28.1" r="5.1" fill="#b0b0b0"/><circle cx="10.6" cy="37.8" r="2.7" fill="none" stroke="#b0b0b0" stroke-width="0.7"/><path d="M8.6 36.6 l2 1.6 l2 -1.6 M10.6 38.2 v2" fill="none" stroke="#b0b0b0" stroke-width="0.6"/><circle cx="10.6" cy="53.2" r="2.7" fill="none" stroke="#b0b0b0" stroke-width="0.7"/><path d="M8.8 54 q1.8 1.6 3.6 0" fill="none" stroke="#b0b0b0" stroke-width="0.6"/><circle cx="10.6" cy="59.5" r="2.3" fill="#0c0c0c"/><text x="7.0" y="68.8" font-size="7.6" textLength="6.7" lengthAdjust="spacingAndGlyphs" fill="#c0c0c0">ID</text><circle cx="10.6" cy="76" r="5.1" fill="#b0b0b0"/><circle cx="27.3" cy="28.1" r="1.9" fill="#c4c4c4"/><circle cx="27.3" cy="40" r="1.9" fill="#c4c4c4"/><circle cx="27.3" cy="51.8" r="1.9" fill="#c4c4c4"/><path d="M25.3 36.2 l2 -3.6 l2 3.6 z" fill="none" stroke="#6a6a6a" stroke-width="0.5"/><path d="M25.1 46 h4.4 M25.9 47.8 h2.8 M27.3 44.6 v1.4" fill="none" stroke="#6a6a6a" stroke-width="0.5"/><path d="M25.1 59 v-2.4 h4.4 v2.4 M24.9 60.6 h1.6 M28.1 60.6 h1.6" fill="none" stroke="#6a6a6a" stroke-width="0.5"/></g><rect x="710" y="181.6" width="19" height="61.4" fill="#000" opacity="0.08"/></svg></div>
<div class="abs" style="left:1221px;top:298px;width:169px;height:83px"><svg class="th2" width="169.0" height="83.0" viewBox="0 0 169.0 83.0"><rect x="3.5" y="2.6" width="164.5" height="77.3" fill="#2f2f2f"/><rect x="0" y="2" width="3.6" height="7" fill="#111"/><rect x="0" y="74" width="3.6" height="8" fill="#111"/><rect x="4.20" y="3.23" width="18.23" height="4.70" fill="#a8a8a8"/><ellipse cx="11.12" cy="5.58" rx="4.01" ry="1.69" fill="none" stroke="#7c7c7c" stroke-width="0.5"/><ellipse cx="19.15" cy="5.58" rx="2.37" ry="1.88" fill="#161616"/><rect x="4.20" y="8.34" width="18.23" height="4.70" fill="#a8a8a8"/><ellipse cx="11.12" cy="10.69" rx="4.01" ry="1.69" fill="none" stroke="#7c7c7c" stroke-width="0.5"/><ellipse cx="19.15" cy="10.69" rx="2.37" ry="1.88" fill="#161616"/><rect x="4.20" y="13.45" width="18.23" height="4.70" fill="#a8a8a8"/><ellipse cx="11.12" cy="15.80" rx="4.01" ry="1.69" fill="none" stroke="#7c7c7c" stroke-width="0.5"/><ellipse cx="19.15" cy="15.80" rx="2.37" ry="1.88" fill="#161616"/><rect x="4.20" y="18.56" width="18.23" height="4.70" fill="#a8a8a8"/><ellipse cx="11.12" cy="20.91" rx="4.01" ry="1.69" fill="none" stroke="#7c7c7c" stroke-width="0.5"/><ellipse cx="19.15" cy="20.91" rx="2.37" ry="1.88" fill="#161616"/><rect x="4.20" y="23.67" width="18.23" height="4.70" fill="#a8a8a8"/><ellipse cx="11.12" cy="26.02" rx="4.01" ry="1.69" fill="none" stroke="#7c7c7c" stroke-width="0.5"/><ellipse cx="19.15" cy="26.02" rx="2.37" ry="1.88" fill="#161616"/><rect x="4.20" y="28.78" width="18.23" height="4.70" fill="#a8a8a8"/><ellipse cx="11.12" cy="31.13" rx="4.01" ry="1.69" fill="none" stroke="#7c7c7c" stroke-width="0.5"/><ellipse cx="19.15" cy="31.13" rx="2.37" ry="1.88" fill="#161616"/><rect x="4.20" y="33.89" width="18.23" height="4.70" fill="#a8a8a8"/><ellipse cx="11.12" cy="36.24" rx="4.01" ry="1.69" fill="none" stroke="#7c7c7c" stroke-width="0.5"/><ellipse cx="19.15" cy="36.24" rx="2.37" ry="1.88" fill="#161616"/><rect x="4.20" y="39.00" width="18.23" height="4.70" fill="#a8a8a8"/><ellipse cx="11.12" cy="41.35" rx="4.01" ry="1.69" fill="none" stroke="#7c7c7c" stroke-width="0.5"/><ellipse cx="19.15" cy="41.35" rx="2.37" ry="1.88" fill="#161616"/><rect x="4.20" y="44.11" width="18.23" height="4.70" fill="#a8a8a8"/><ellipse cx="11.12" cy="46.46" rx="4.01" ry="1.69" fill="none" stroke="#7c7c7c" stroke-width="0.5"/><ellipse cx="19.15" cy="46.46" rx="2.37" ry="1.88" fill="#161616"/><rect x="4.20" y="49.21" width="18.23" height="4.70" fill="#a8a8a8"/><ellipse cx="11.12" cy="51.56" rx="4.01" ry="1.69" fill="none" stroke="#7c7c7c" stroke-width="0.5"/><ellipse cx="19.15" cy="51.56" rx="2.37" ry="1.88" fill="#161616"/><rect x="4.20" y="54.32" width="18.23" height="4.70" fill="#a8a8a8"/><ellipse cx="11.12" cy="56.67" rx="4.01" ry="1.69" fill="none" stroke="#7c7c7c" stroke-width="0.5"/><ellipse cx="19.15" cy="56.67" rx="2.37" ry="1.88" fill="#161616"/><rect x="4.20" y="59.43" width="18.23" height="4.70" fill="#a8a8a8"/><ellipse cx="11.12" cy="61.78" rx="4.01" ry="1.69" fill="none" stroke="#7c7c7c" stroke-width="0.5"/><ellipse cx="19.15" cy="61.78" rx="2.37" ry="1.88" fill="#161616"/><rect x="4.20" y="64.54" width="18.23" height="4.70" fill="#a8a8a8"/><ellipse cx="11.12" cy="66.89" rx="4.01" ry="1.69" fill="none" stroke="#7c7c7c" stroke-width="0.5"/><ellipse cx="19.15" cy="66.89" rx="2.37" ry="1.88" fill="#161616"/><rect x="4.20" y="69.65" width="18.23" height="4.70" fill="#a8a8a8"/><ellipse cx="11.12" cy="72.00" rx="4.01" ry="1.69" fill="none" stroke="#7c7c7c" stroke-width="0.5"/><ellipse cx="19.15" cy="72.00" rx="2.37" ry="1.88" fill="#161616"/><rect x="4.20" y="74.76" width="18.23" height="4.70" fill="#a8a8a8"/><ellipse cx="11.12" cy="77.11" rx="4.01" ry="1.69" fill="none" stroke="#7c7c7c" stroke-width="0.5"/><ellipse cx="19.15" cy="77.11" rx="2.37" ry="1.88" fill="#161616"/><rect x="23.62" y="3.23" width="18.23" height="4.70" fill="#9c9c9c"/><ellipse cx="30.55" cy="5.58" rx="4.01" ry="1.69" fill="#adadad" stroke="#888" stroke-width="0.4"/><ellipse cx="38.57" cy="5.58" rx="2.37" ry="1.88" fill="#161616"/><rect x="23.62" y="8.34" width="18.23" height="4.70" fill="#9c9c9c"/><ellipse cx="30.55" cy="10.69" rx="4.01" ry="1.69" fill="#adadad" stroke="#888" stroke-width="0.4"/><ellipse cx="38.57" cy="10.69" rx="2.37" ry="1.88" fill="#161616"/><rect x="23.62" y="13.45" width="18.23" height="4.70" fill="#9c9c9c"/><ellipse cx="30.55" cy="15.80" rx="4.01" ry="1.69" fill="#adadad" stroke="#888" stroke-width="0.4"/><ellipse cx="38.57" cy="15.80" rx="2.37" ry="1.88" fill="#161616"/><rect x="23.62" y="18.56" width="18.23" height="4.70" fill="#9c9c9c"/><ellipse cx="30.55" cy="20.91" rx="4.01" ry="1.69" fill="#adadad" stroke="#888" stroke-width="0.4"/><ellipse cx="38.57" cy="20.91" rx="2.37" ry="1.88" fill="#161616"/><rect x="23.62" y="23.67" width="18.23" height="4.70" fill="#9c9c9c"/><ellipse cx="30.55" cy="26.02" rx="4.01" ry="1.69" fill="#adadad" stroke="#888" stroke-width="0.4"/><ellipse cx="38.57" cy="26.02" rx="2.37" ry="1.88" fill="#161616"/><rect x="23.62" y="28.78" width="18.23" height="4.70" fill="#9c9c9c"/><ellipse cx="30.55" cy="31.13" rx="4.01" ry="1.69" fill="#adadad" stroke="#888" stroke-width="0.4"/><ellipse cx="38.57" cy="31.13" rx="2.37" ry="1.88" fill="#161616"/><rect x="23.62" y="33.89" width="18.23" height="4.70" fill="#9c9c9c"/><ellipse cx="30.55" cy="36.24" rx="4.01" ry="1.69" fill="#adadad" stroke="#888" stroke-width="0.4"/><ellipse cx="38.57" cy="36.24" rx="2.37" ry="1.88" fill="#161616"/><rect x="23.62" y="39.00" width="18.23" height="4.70" fill="#9c9c9c"/><ellipse cx="30.55" cy="41.35" rx="4.01" ry="1.69" fill="#adadad" stroke="#888" stroke-width="0.4"/><ellipse cx="38.57" cy="41.35" rx="2.37" ry="1.88" fill="#161616"/><rect x="23.62" y="44.11" width="18.23" height="4.70" fill="#9c9c9c"/><ellipse cx="30.55" cy="46.46" rx="4.01" ry="1.69" fill="#adadad" stroke="#888" stroke-width="0.4"/><ellipse cx="38.57" cy="46.46" rx="2.37" ry="1.88" fill="#161616"/><rect x="23.62" y="49.21" width="18.23" height="4.70" fill="#9c9c9c"/><ellipse cx="30.55" cy="51.56" rx="4.01" ry="1.69" fill="#adadad" stroke="#888" stroke-width="0.4"/><ellipse cx="38.57" cy="51.56" rx="2.37" ry="1.88" fill="#161616"/><rect x="23.62" y="54.32" width="18.23" height="4.70" fill="#9c9c9c"/><ellipse cx="30.55" cy="56.67" rx="4.01" ry="1.69" fill="#adadad" stroke="#888" stroke-width="0.4"/><ellipse cx="38.57" cy="56.67" rx="2.37" ry="1.88" fill="#161616"/><rect x="23.62" y="59.43" width="18.23" height="4.70" fill="#9c9c9c"/><ellipse cx="30.55" cy="61.78" rx="4.01" ry="1.69" fill="#adadad" stroke="#888" stroke-width="0.4"/><ellipse cx="38.57" cy="61.78" rx="2.37" ry="1.88" fill="#161616"/><rect x="23.62" y="64.54" width="18.23" height="4.70" fill="#9c9c9c"/><ellipse cx="30.55" cy="66.89" rx="4.01" ry="1.69" fill="#adadad" stroke="#888" stroke-width="0.4"/><ellipse cx="38.57" cy="66.89" rx="2.37" ry="1.88" fill="#161616"/><rect x="23.62" y="69.65" width="18.23" height="4.70" fill="#9c9c9c"/><ellipse cx="30.55" cy="72.00" rx="4.01" ry="1.69" fill="#adadad" stroke="#888" stroke-width="0.4"/><ellipse cx="38.57" cy="72.00" rx="2.37" ry="1.88" fill="#161616"/><rect x="23.62" y="74.76" width="18.23" height="4.70" fill="#9c9c9c"/><ellipse cx="30.55" cy="77.11" rx="4.01" ry="1.69" fill="#adadad" stroke="#888" stroke-width="0.4"/><ellipse cx="38.57" cy="77.11" rx="2.37" ry="1.88" fill="#161616"/><rect x="42.51" y="3.23" width="18.23" height="4.70" fill="#232323"/><ellipse cx="57.47" cy="5.58" rx="2.55" ry="1.97" fill="#0c0c0c"/><rect x="42.51" y="8.34" width="18.23" height="4.70" fill="#232323"/><ellipse cx="57.47" cy="10.69" rx="2.55" ry="1.97" fill="#0c0c0c"/><rect x="42.51" y="13.45" width="18.23" height="4.70" fill="#232323"/><ellipse cx="57.47" cy="15.80" rx="2.55" ry="1.97" fill="#0c0c0c"/><rect x="42.51" y="18.56" width="18.23" height="4.70" fill="#232323"/><ellipse cx="57.47" cy="20.91" rx="2.55" ry="1.97" fill="#0c0c0c"/><rect x="42.51" y="23.67" width="18.23" height="4.70" fill="#232323"/><ellipse cx="57.47" cy="26.02" rx="2.55" ry="1.97" fill="#0c0c0c"/><rect x="42.51" y="28.78" width="18.23" height="4.70" fill="#232323"/><ellipse cx="57.47" cy="31.13" rx="2.55" ry="1.97" fill="#0c0c0c"/><rect x="42.51" y="44.11" width="18.23" height="4.70" fill="#232323"/><ellipse cx="57.47" cy="46.46" rx="2.55" ry="1.97" fill="#0c0c0c"/><rect x="42.51" y="49.21" width="18.23" height="4.70" fill="#232323"/><ellipse cx="57.47" cy="51.56" rx="2.55" ry="1.97" fill="#0c0c0c"/><rect x="42.51" y="54.32" width="18.23" height="4.70" fill="#232323"/><ellipse cx="57.47" cy="56.67" rx="2.55" ry="1.97" fill="#0c0c0c"/><rect x="42.51" y="59.43" width="18.23" height="4.70" fill="#232323"/><ellipse cx="57.47" cy="61.78" rx="2.55" ry="1.97" fill="#0c0c0c"/><rect x="42.51" y="64.54" width="18.23" height="4.70" fill="#232323"/><ellipse cx="57.47" cy="66.89" rx="2.55" ry="1.97" fill="#0c0c0c"/><rect x="42.51" y="69.65" width="18.23" height="4.70" fill="#232323"/><ellipse cx="57.47" cy="72.00" rx="2.55" ry="1.97" fill="#0c0c0c"/><rect x="42.51" y="74.76" width="18.23" height="4.70" fill="#232323"/><ellipse cx="57.47" cy="77.11" rx="2.55" ry="1.97" fill="#0c0c0c"/><rect x="61.94" y="3.23" width="18.23" height="4.70" fill="#232323"/><ellipse cx="76.89" cy="5.58" rx="2.55" ry="1.97" fill="#0c0c0c"/><rect x="61.94" y="8.34" width="18.23" height="4.70" fill="#232323"/><ellipse cx="76.89" cy="10.69" rx="2.55" ry="1.97" fill="#0c0c0c"/><rect x="61.94" y="13.45" width="18.23" height="4.70" fill="#232323"/><ellipse cx="76.89" cy="15.80" rx="2.55" ry="1.97" fill="#0c0c0c"/><rect x="61.94" y="18.56" width="18.23" height="4.70" fill="#232323"/><ellipse cx="76.89" cy="20.91" rx="2.55" ry="1.97" fill="#0c0c0c"/><rect x="61.94" y="23.67" width="18.23" height="4.70" fill="#232323"/><ellipse cx="76.89" cy="26.02" rx="2.55" ry="1.97" fill="#0c0c0c"/><rect x="61.94" y="28.78" width="18.23" height="4.70" fill="#232323"/><ellipse cx="76.89" cy="31.13" rx="2.55" ry="1.97" fill="#0c0c0c"/><rect x="61.94" y="44.11" width="18.23" height="4.70" fill="#232323"/><ellipse cx="76.89" cy="46.46" rx="2.55" ry="1.97" fill="#0c0c0c"/><rect x="61.94" y="49.21" width="18.23" height="4.70" fill="#232323"/><ellipse cx="76.89" cy="51.56" rx="2.55" ry="1.97" fill="#0c0c0c"/><rect x="61.94" y="54.32" width="18.23" height="4.70" fill="#232323"/><ellipse cx="76.89" cy="56.67" rx="2.55" ry="1.97" fill="#0c0c0c"/><rect x="61.94" y="59.43" width="18.23" height="4.70" fill="#232323"/><ellipse cx="76.89" cy="61.78" rx="2.55" ry="1.97" fill="#0c0c0c"/><rect x="61.94" y="64.54" width="18.23" height="4.70" fill="#232323"/><ellipse cx="76.89" cy="66.89" rx="2.55" ry="1.97" fill="#0c0c0c"/><rect x="61.94" y="69.65" width="18.23" height="4.70" fill="#232323"/><ellipse cx="76.89" cy="72.00" rx="2.55" ry="1.97" fill="#0c0c0c"/><rect x="61.94" y="74.76" width="18.23" height="4.70" fill="#232323"/><ellipse cx="76.89" cy="77.11" rx="2.55" ry="1.97" fill="#0c0c0c"/><rect x="89.42" y="3.23" width="18.23" height="4.70" fill="#232323"/><ellipse cx="104.38" cy="5.58" rx="2.55" ry="1.97" fill="#0c0c0c"/><rect x="89.42" y="8.34" width="18.23" height="4.70" fill="#232323"/><ellipse cx="104.38" cy="10.69" rx="2.55" ry="1.97" fill="#0c0c0c"/><rect x="89.42" y="13.45" width="18.23" height="4.70" fill="#232323"/><ellipse cx="104.38" cy="15.80" rx="2.55" ry="1.97" fill="#0c0c0c"/><rect x="89.42" y="18.56" width="18.23" height="4.70" fill="#232323"/><ellipse cx="104.38" cy="20.91" rx="2.55" ry="1.97" fill="#0c0c0c"/><rect x="89.42" y="23.67" width="18.23" height="4.70" fill="#232323"/><ellipse cx="104.38" cy="26.02" rx="2.55" ry="1.97" fill="#0c0c0c"/><rect x="89.42" y="28.78" width="18.23" height="4.70" fill="#232323"/><ellipse cx="104.38" cy="31.13" rx="2.55" ry="1.97" fill="#0c0c0c"/><rect x="89.42" y="44.11" width="18.23" height="4.70" fill="#232323"/><ellipse cx="104.38" cy="46.46" rx="2.55" ry="1.97" fill="#0c0c0c"/><rect x="89.42" y="49.21" width="18.23" height="4.70" fill="#232323"/><ellipse cx="104.38" cy="51.56" rx="2.55" ry="1.97" fill="#0c0c0c"/><rect x="89.42" y="54.32" width="18.23" height="4.70" fill="#232323"/><ellipse cx="104.38" cy="56.67" rx="2.55" ry="1.97" fill="#0c0c0c"/><rect x="89.42" y="59.43" width="18.23" height="4.70" fill="#232323"/><ellipse cx="104.38" cy="61.78" rx="2.55" ry="1.97" fill="#0c0c0c"/><rect x="89.42" y="64.54" width="18.23" height="4.70" fill="#232323"/><ellipse cx="104.38" cy="66.89" rx="2.55" ry="1.97" fill="#0c0c0c"/><rect x="89.42" y="69.65" width="18.23" height="4.70" fill="#232323"/><ellipse cx="104.38" cy="72.00" rx="2.55" ry="1.97" fill="#0c0c0c"/><rect x="89.42" y="74.76" width="18.23" height="4.70" fill="#232323"/><ellipse cx="104.38" cy="77.11" rx="2.55" ry="1.97" fill="#0c0c0c"/><rect x="108.85" y="3.23" width="18.23" height="4.70" fill="#9c9c9c"/><ellipse cx="115.78" cy="5.58" rx="4.01" ry="1.69" fill="#adadad" stroke="#888" stroke-width="0.4"/><ellipse cx="123.80" cy="5.58" rx="2.37" ry="1.88" fill="#161616"/><rect x="108.85" y="8.34" width="18.23" height="4.70" fill="#9c9c9c"/><ellipse cx="115.78" cy="10.69" rx="4.01" ry="1.69" fill="#adadad" stroke="#888" stroke-width="0.4"/><ellipse cx="123.80" cy="10.69" rx="2.37" ry="1.88" fill="#161616"/><rect x="108.85" y="13.45" width="18.23" height="4.70" fill="#9c9c9c"/><ellipse cx="115.78" cy="15.80" rx="4.01" ry="1.69" fill="#adadad" stroke="#888" stroke-width="0.4"/><ellipse cx="123.80" cy="15.80" rx="2.37" ry="1.88" fill="#161616"/><rect x="108.85" y="18.56" width="18.23" height="4.70" fill="#9c9c9c"/><ellipse cx="115.78" cy="20.91" rx="4.01" ry="1.69" fill="#adadad" stroke="#888" stroke-width="0.4"/><ellipse cx="123.80" cy="20.91" rx="2.37" ry="1.88" fill="#161616"/><rect x="108.85" y="23.67" width="18.23" height="4.70" fill="#9c9c9c"/><ellipse cx="115.78" cy="26.02" rx="4.01" ry="1.69" fill="#adadad" stroke="#888" stroke-width="0.4"/><ellipse cx="123.80" cy="26.02" rx="2.37" ry="1.88" fill="#161616"/><rect x="108.85" y="28.78" width="18.23" height="4.70" fill="#9c9c9c"/><ellipse cx="115.78" cy="31.13" rx="4.01" ry="1.69" fill="#adadad" stroke="#888" stroke-width="0.4"/><ellipse cx="123.80" cy="31.13" rx="2.37" ry="1.88" fill="#161616"/><rect x="108.85" y="44.11" width="18.23" height="4.70" fill="#9c9c9c"/><ellipse cx="115.78" cy="46.46" rx="4.01" ry="1.69" fill="#adadad" stroke="#888" stroke-width="0.4"/><ellipse cx="123.80" cy="46.46" rx="2.37" ry="1.88" fill="#161616"/><rect x="108.85" y="49.21" width="18.23" height="4.70" fill="#9c9c9c"/><ellipse cx="115.78" cy="51.56" rx="4.01" ry="1.69" fill="#adadad" stroke="#888" stroke-width="0.4"/><ellipse cx="123.80" cy="51.56" rx="2.37" ry="1.88" fill="#161616"/><rect x="108.85" y="54.32" width="18.23" height="4.70" fill="#9c9c9c"/><ellipse cx="115.78" cy="56.67" rx="4.01" ry="1.69" fill="#adadad" stroke="#888" stroke-width="0.4"/><ellipse cx="123.80" cy="56.67" rx="2.37" ry="1.88" fill="#161616"/><rect x="108.85" y="59.43" width="18.23" height="4.70" fill="#9c9c9c"/><ellipse cx="115.78" cy="61.78" rx="4.01" ry="1.69" fill="#adadad" stroke="#888" stroke-width="0.4"/><ellipse cx="123.80" cy="61.78" rx="2.37" ry="1.88" fill="#161616"/><rect x="108.85" y="64.54" width="18.23" height="4.70" fill="#9c9c9c"/><ellipse cx="115.78" cy="66.89" rx="4.01" ry="1.69" fill="#adadad" stroke="#888" stroke-width="0.4"/><ellipse cx="123.80" cy="66.89" rx="2.37" ry="1.88" fill="#161616"/><rect x="128.14" y="3.23" width="18.23" height="4.70" fill="#9c9c9c"/><ellipse cx="135.07" cy="5.58" rx="4.01" ry="1.69" fill="#adadad" stroke="#888" stroke-width="0.4"/><ellipse cx="143.09" cy="5.58" rx="2.37" ry="1.88" fill="#161616"/><rect x="128.14" y="8.34" width="18.23" height="4.70" fill="#9c9c9c"/><ellipse cx="135.07" cy="10.69" rx="4.01" ry="1.69" fill="#adadad" stroke="#888" stroke-width="0.4"/><ellipse cx="143.09" cy="10.69" rx="2.37" ry="1.88" fill="#161616"/><rect x="128.14" y="13.45" width="18.23" height="4.70" fill="#9c9c9c"/><ellipse cx="135.07" cy="15.80" rx="4.01" ry="1.69" fill="#adadad" stroke="#888" stroke-width="0.4"/><ellipse cx="143.09" cy="15.80" rx="2.37" ry="1.88" fill="#161616"/><rect x="128.14" y="18.56" width="18.23" height="4.70" fill="#9c9c9c"/><ellipse cx="135.07" cy="20.91" rx="4.01" ry="1.69" fill="#adadad" stroke="#888" stroke-width="0.4"/><ellipse cx="143.09" cy="20.91" rx="2.37" ry="1.88" fill="#161616"/><rect x="128.14" y="23.67" width="18.23" height="4.70" fill="#9c9c9c"/><ellipse cx="135.07" cy="26.02" rx="4.01" ry="1.69" fill="#adadad" stroke="#888" stroke-width="0.4"/><ellipse cx="143.09" cy="26.02" rx="2.37" ry="1.88" fill="#161616"/><rect x="128.14" y="28.78" width="18.23" height="4.70" fill="#9c9c9c"/><ellipse cx="135.07" cy="31.13" rx="4.01" ry="1.69" fill="#adadad" stroke="#888" stroke-width="0.4"/><ellipse cx="143.09" cy="31.13" rx="2.37" ry="1.88" fill="#161616"/><rect x="128.14" y="44.11" width="18.23" height="4.70" fill="#9c9c9c"/><ellipse cx="135.07" cy="46.46" rx="4.01" ry="1.69" fill="#adadad" stroke="#888" stroke-width="0.4"/><ellipse cx="143.09" cy="46.46" rx="2.37" ry="1.88" fill="#161616"/><rect x="128.14" y="49.21" width="18.23" height="4.70" fill="#9c9c9c"/><ellipse cx="135.07" cy="51.56" rx="4.01" ry="1.69" fill="#adadad" stroke="#888" stroke-width="0.4"/><ellipse cx="143.09" cy="51.56" rx="2.37" ry="1.88" fill="#161616"/><rect x="128.14" y="54.32" width="18.23" height="4.70" fill="#9c9c9c"/><ellipse cx="135.07" cy="56.67" rx="4.01" ry="1.69" fill="#adadad" stroke="#888" stroke-width="0.4"/><ellipse cx="143.09" cy="56.67" rx="2.37" ry="1.88" fill="#161616"/><rect x="128.14" y="59.43" width="18.23" height="4.70" fill="#9c9c9c"/><ellipse cx="135.07" cy="61.78" rx="4.01" ry="1.69" fill="#adadad" stroke="#888" stroke-width="0.4"/><ellipse cx="143.09" cy="61.78" rx="2.37" ry="1.88" fill="#161616"/><rect x="128.14" y="64.54" width="18.23" height="4.70" fill="#9c9c9c"/><ellipse cx="135.07" cy="66.89" rx="4.01" ry="1.69" fill="#adadad" stroke="#888" stroke-width="0.4"/><ellipse cx="143.09" cy="66.89" rx="2.37" ry="1.88" fill="#161616"/><rect x="147.17" y="3.23" width="18.23" height="4.70" fill="#9c9c9c"/><ellipse cx="154.10" cy="5.58" rx="4.01" ry="1.69" fill="#adadad" stroke="#888" stroke-width="0.4"/><ellipse cx="162.12" cy="5.58" rx="2.37" ry="1.88" fill="#161616"/><rect x="147.17" y="8.34" width="18.23" height="4.70" fill="#9c9c9c"/><ellipse cx="154.10" cy="10.69" rx="4.01" ry="1.69" fill="#adadad" stroke="#888" stroke-width="0.4"/><ellipse cx="162.12" cy="10.69" rx="2.37" ry="1.88" fill="#161616"/><rect x="147.17" y="13.45" width="18.23" height="4.70" fill="#9c9c9c"/><ellipse cx="154.10" cy="15.80" rx="4.01" ry="1.69" fill="#adadad" stroke="#888" stroke-width="0.4"/><ellipse cx="162.12" cy="15.80" rx="2.37" ry="1.88" fill="#161616"/><rect x="147.17" y="18.56" width="18.23" height="4.70" fill="#9c9c9c"/><ellipse cx="154.10" cy="20.91" rx="4.01" ry="1.69" fill="#adadad" stroke="#888" stroke-width="0.4"/><ellipse cx="162.12" cy="20.91" rx="2.37" ry="1.88" fill="#161616"/><rect x="147.17" y="23.67" width="18.23" height="4.70" fill="#9c9c9c"/><ellipse cx="154.10" cy="26.02" rx="4.01" ry="1.69" fill="#adadad" stroke="#888" stroke-width="0.4"/><ellipse cx="162.12" cy="26.02" rx="2.37" ry="1.88" fill="#161616"/><rect x="147.17" y="28.78" width="18.23" height="4.70" fill="#9c9c9c"/><ellipse cx="154.10" cy="31.13" rx="4.01" ry="1.69" fill="#adadad" stroke="#888" stroke-width="0.4"/><ellipse cx="162.12" cy="31.13" rx="2.37" ry="1.88" fill="#161616"/><rect x="147.17" y="44.11" width="18.23" height="4.70" fill="#9c9c9c"/><ellipse cx="154.10" cy="46.46" rx="4.01" ry="1.69" fill="#adadad" stroke="#888" stroke-width="0.4"/><ellipse cx="162.12" cy="46.46" rx="2.37" ry="1.88" fill="#161616"/><rect x="147.17" y="49.21" width="18.23" height="4.70" fill="#9c9c9c"/><ellipse cx="154.10" cy="51.56" rx="4.01" ry="1.69" fill="#adadad" stroke="#888" stroke-width="0.4"/><ellipse cx="162.12" cy="51.56" rx="2.37" ry="1.88" fill="#161616"/><rect x="147.17" y="54.32" width="18.23" height="4.70" fill="#9c9c9c"/><ellipse cx="154.10" cy="56.67" rx="4.01" ry="1.69" fill="#adadad" stroke="#888" stroke-width="0.4"/><ellipse cx="162.12" cy="56.67" rx="2.37" ry="1.88" fill="#161616"/><rect x="147.17" y="59.43" width="18.23" height="4.70" fill="#9c9c9c"/><ellipse cx="154.10" cy="61.78" rx="4.01" ry="1.69" fill="#adadad" stroke="#888" stroke-width="0.4"/><ellipse cx="162.12" cy="61.78" rx="2.37" ry="1.88" fill="#161616"/><rect x="147.17" y="64.54" width="18.23" height="4.70" fill="#9c9c9c"/><ellipse cx="154.10" cy="66.89" rx="4.01" ry="1.69" fill="#adadad" stroke="#888" stroke-width="0.4"/><ellipse cx="162.12" cy="66.89" rx="2.37" ry="1.88" fill="#161616"/><rect x="42.5" y="34.0" width="124.2" height="9.5" fill="#343434"/><rect x="43.2" y="35.6" width="12.6" height="6.6" fill="#2c2c2c"/><rect x="146.2" y="35.6" width="11.2" height="6.6" fill="#2c2c2c"/><rect x="108.8" y="73.9" width="18.5" height="5.5" fill="#1a1a1a"/><rect x="127.7" y="70.6" width="38.3" height="9.2" fill="#3a3a3a"/><rect x="165.4" y="71.0" width="2.4" height="2.4" fill="#2a6f63"/></svg></div>
<span class="t" id="t_sys" style="left:14.0px;top:24.72px;font-size:11.5px;font-weight:400;color:#fff;transform:scaleX(1.0646);-webkit-text-stroke:0.25px;">System</span>
<span class="t" id="t_title" style="left:14.4px;top:46.60px;font-size:29px;font-weight:700;color:#fff;transform:scaleX(0.9486);">View Enclosure</span>
<span class="t" id="t_elem" style="left:1328.8px;top:51.58px;font-size:14.5px;font-weight:700;color:#e6e6e6;transform:scaleX(0.9306);">Elements</span>
<span class="t" id="t_disks" style="left:32.0px;top:150.68px;font-size:22px;font-weight:700;color:#dedede;transform:scaleX(0.9614);">Disks on M60</span>
<span class="t" id="t_edit" style="left:1088.1px;top:153.03px;font-size:14.5px;font-weight:700;color:#e6e6e6;transform:scaleX(0.9166);">Edit Label</span>
<span class="t" id="t_sdd" style="left:93.0px;top:476.22px;font-size:34px;font-weight:700;color:#fff;transform:scaleX(0.9295);">sdd</span>
<span class="t" id="t_topo" style="left:62.1px;top:521.75px;font-size:14px;font-weight:400;color:#dcdcdc;transform:scaleX(1.0473);-webkit-text-stroke:0.25px;">Topology: mirror-0</span>
<span class="t" id="t_cat" style="left:71.4px;top:544.75px;font-size:14px;font-weight:400;color:#dcdcdc;transform:scaleX(1.0008);-webkit-text-stroke:0.25px;">Category:  Data</span>
<span class="t" id="t_slot" style="left:98.7px;top:567.95px;font-size:14px;font-weight:400;color:#dcdcdc;transform:scaleX(1.0896);-webkit-text-stroke:0.25px;">Slot: 1</span>
<span class="t" id="t_l1" style="left:1060.9px;top:510.75px;font-size:14px;font-weight:400;color:#dcdcdc;transform:scaleX(1.0507);-webkit-text-stroke:0.25px;">sdd</span>
<span class="t" id="t_l2" style="left:1060.9px;top:534.75px;font-size:14px;font-weight:400;color:#dcdcdc;transform:scaleX(1.0010);-webkit-text-stroke:0.25px;">sde</span>
<span class="t" id="t_front" style="left:544.6px;top:827.58px;font-size:14.5px;font-weight:700;color:#e6e6e6;transform:scaleX(0.9410);">Front</span>
<span class="t" id="t_rear" style="left:615.6px;top:827.58px;font-size:14.5px;font-weight:700;color:#e6e6e6;transform:scaleX(0.9422);">Rear</span>
<span class="t" id="t_dd" style="left:76.0px;top:881.71px;font-size:16px;font-weight:400;color:#dcdcdc;transform:scaleX(1.0252);-webkit-text-stroke:0.25px;">Disk Details for sdd</span>
<span class="t" id="t_tsdd" style="left:148.5px;top:945.64px;font-size:11px;font-weight:700;color:#fff;transform:scaleX(0.9665);">sdd</span>
<span class="t" id="t_tsize" style="left:137.2px;top:1007.64px;font-size:11px;font-weight:400;color:#fff;transform:scaleX(1.0250);-webkit-text-stroke:0.25px;">3.64 TiB</span>
<span class="t" id="t_size" style="left:126.3px;top:1036.66px;font-size:16px;font-weight:400;color:#dcdcdc;transform:scaleX(1.0857);-webkit-text-stroke:0.25px;">3.64 TiB</span>
<span class="t" id="t_light" style="left:115.6px;top:1065.35px;font-size:14px;font-weight:400;color:#dcdcdc;transform:scaleX(1.0603);-webkit-text-stroke:0.25px;">Identify light is off.</span>
<span class="t" id="t_ident" style="left:132.8px;top:1099.93px;font-size:14.5px;font-weight:700;color:#e6e6e6;transform:scaleX(0.9880);">Identify</span>
<span class="t" id="t_pool" style="left:312.6px;top:927.74px;font-size:13.3px;font-weight:400;color:#dcdcdc;transform:scaleX(1.1089);-webkit-text-stroke:0.25px;">Pool</span>
<span class="t" id="t_sanity" style="left:312.9px;top:944.92px;font-size:16.4px;font-weight:400;color:#dcdcdc;transform:scaleX(1.0578);-webkit-text-stroke:0.25px;">sanity</span>
<span class="t" id="t_status" style="left:312.7px;top:985.54px;font-size:13.3px;font-weight:400;color:#dcdcdc;transform:scaleX(1.1011);-webkit-text-stroke:0.25px;">Status</span>
<span class="t" id="t_online" style="left:313.0px;top:1002.72px;font-size:16.4px;font-weight:400;color:#dcdcdc;transform:scaleX(1.0364);-webkit-text-stroke:0.25px;">Online</span>
<span class="t" id="t_model" style="left:527.6px;top:927.74px;font-size:13.3px;font-weight:400;color:#dcdcdc;transform:scaleX(1.0993);-webkit-text-stroke:0.25px;">Model</span>
<span class="t" id="t_hus" style="left:527.3px;top:944.92px;font-size:16.4px;font-weight:400;color:#dcdcdc;transform:scaleX(1.0518);-webkit-text-stroke:0.25px;">HUS726040AL4210</span>
<span class="t" id="t_rerr" style="left:527.7px;top:985.54px;font-size:13.3px;font-weight:400;color:#dcdcdc;transform:scaleX(1.0332);-webkit-text-stroke:0.25px;">Read Errors</span>
<span class="t" id="t_r0" style="left:528.1px;top:1002.72px;font-size:16.4px;font-weight:400;color:#dcdcdc;transform:scaleX(1.0704);-webkit-text-stroke:0.25px;">0</span>
<span class="t" id="t_serial" style="left:741.2px;top:927.74px;font-size:13.3px;font-weight:400;color:#dcdcdc;transform:scaleX(1.0853);-webkit-text-stroke:0.25px;">Serial</span>
<span class="t" id="t_nhg" style="left:741.0px;top:944.92px;font-size:16.4px;font-weight:400;color:#dcdcdc;transform:scaleX(0.9820);-webkit-text-stroke:0.25px;">NHGPZ5MY</span>
<span class="t" id="t_werr" style="left:742.2px;top:985.54px;font-size:13.3px;font-weight:400;color:#dcdcdc;transform:scaleX(1.0523);-webkit-text-stroke:0.25px;">Write Errors</span>
<span class="t" id="t_w0" style="left:742.6px;top:1002.72px;font-size:16.4px;font-weight:400;color:#dcdcdc;transform:scaleX(1.1214);-webkit-text-stroke:0.25px;">0</span>
<span class="t" id="t_rot" style="left:956.3px;top:927.74px;font-size:13.3px;font-weight:400;color:#dcdcdc;transform:scaleX(1.0635);-webkit-text-stroke:0.25px;">Rotation Rate</span>
<span class="t" id="t_rpm" style="left:956.3px;top:944.92px;font-size:16.4px;font-weight:400;color:#dcdcdc;transform:scaleX(1.0318);-webkit-text-stroke:0.25px;">7200 RPM</span>
<span class="t" id="t_cerr" style="left:956.5px;top:985.54px;font-size:13.3px;font-weight:400;color:#dcdcdc;transform:scaleX(1.0444);-webkit-text-stroke:0.25px;">Checksum Errors</span>
<span class="t" id="t_c0" style="left:956.5px;top:1002.72px;font-size:16.4px;font-weight:400;color:#dcdcdc;transform:scaleX(1.1274);-webkit-text-stroke:0.25px;">0</span>
<span class="t" id="t_e1" style="left:1252.3px;top:242.74px;font-size:12px;font-weight:400;color:#d6d6d6;transform:scaleX(1.0376);-webkit-text-stroke:0.55px;">iX 4024Sp e001 (1)</span>
<span class="t" id="t_e2" style="left:1212.8px;top:396.64px;font-size:12px;font-weight:400;color:#d6d6d6;transform:scaleX(1.0240);-webkit-text-stroke:0.55px;">VikingES VDS-41022-BB 020d (2)</span>
</div>
</body>
</html>
